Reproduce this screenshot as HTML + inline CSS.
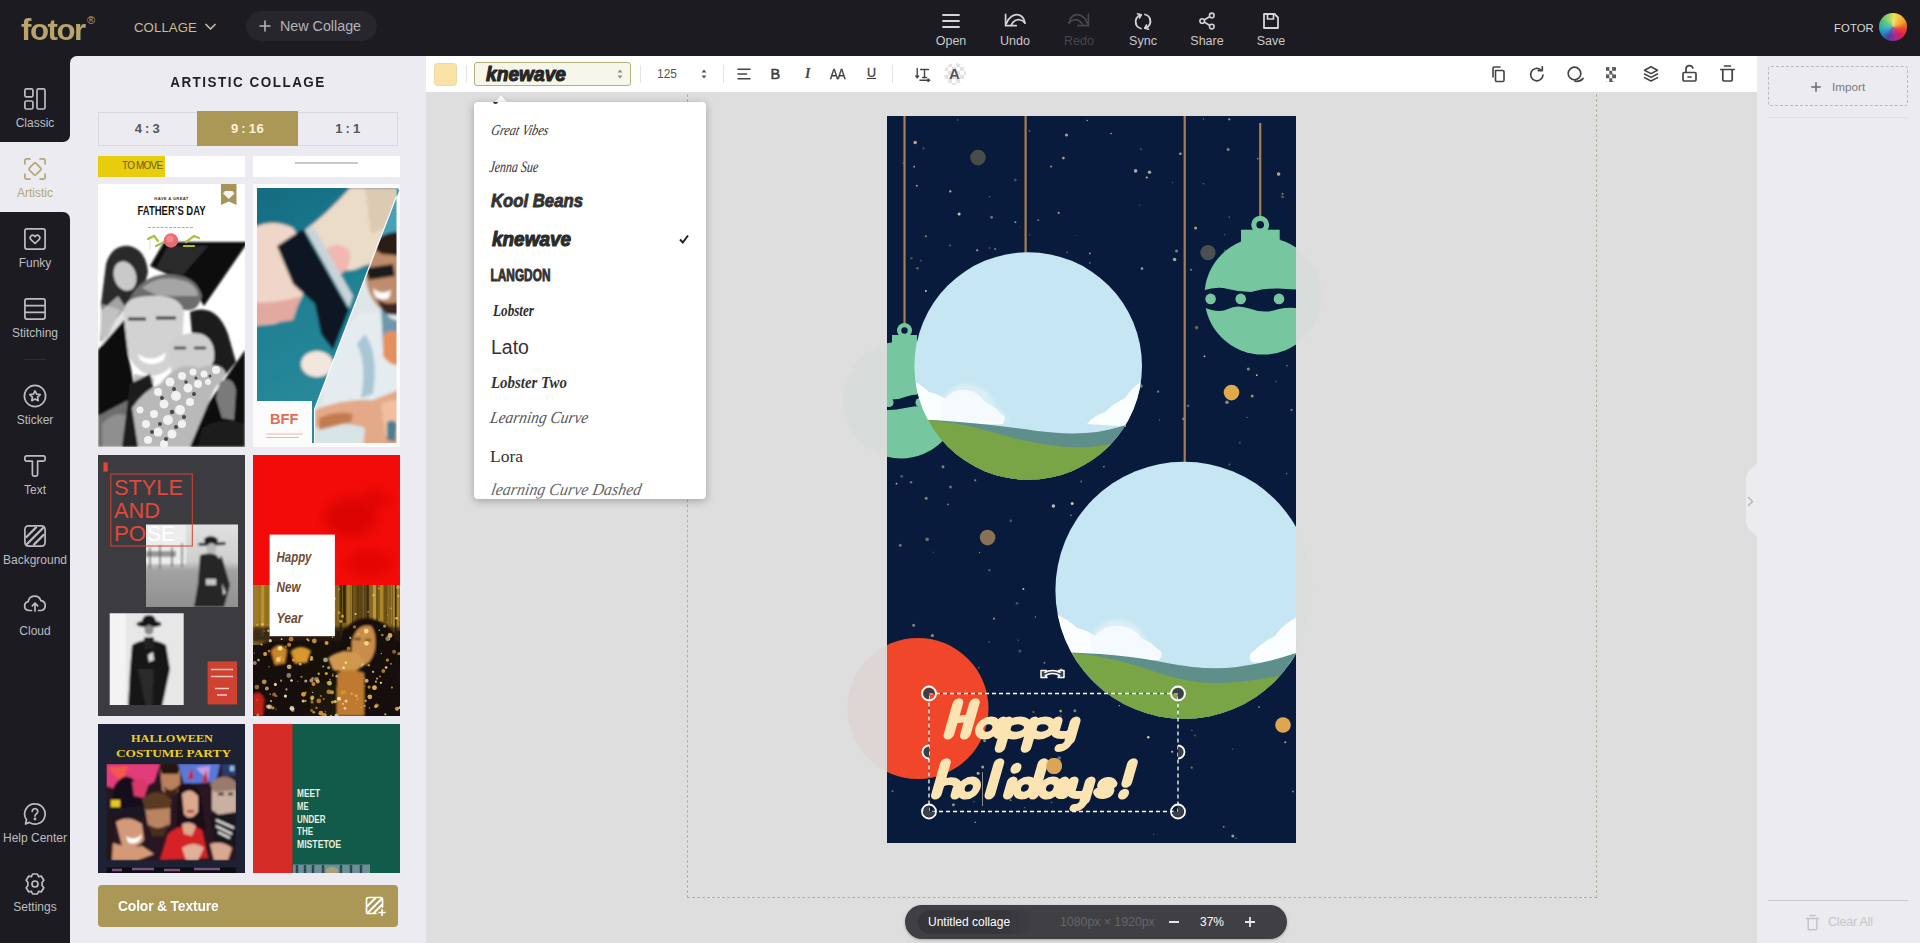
<!DOCTYPE html>
<html>
<head>
<meta charset="utf-8">
<title>Fotor Collage</title>
<style>
*{box-sizing:border-box;margin:0;padding:0}
html,body{width:1920px;height:943px;overflow:hidden;background:#1c1b21;font-family:"Liberation Sans",sans-serif;}
.abs{position:absolute}
#root{position:relative;width:1920px;height:943px;overflow:hidden;background:#1c1b21}
/* top bar */
#top{position:absolute;left:0;top:0;width:1920px;height:56px;background:#1c1b21}
.tlabel{position:absolute;top:34px;width:60px;text-align:center;font-size:12.5px;color:#c9c9cc;line-height:15px}
/* sidebar */
#side{position:absolute;left:0;top:56px;width:70px;height:887px;background:#ebebf1}
.sitem{position:absolute;left:0;width:70px;height:70px;color:#bdbdc0;font-size:12px;text-align:center}
.sitem svg{position:absolute;left:23px;top:15px;width:24px;height:24px}
.sitem span{position:absolute;left:-5px;width:80px;top:43.5px;line-height:15px;text-align:center}
/* panel */
#panel{position:absolute;left:70px;top:56px;width:356px;height:887px;background:#ebebf1;border-top-left-radius:7px}
.thumb{position:absolute;overflow:hidden}
/* toolbar */
#tool{position:absolute;left:426px;top:56px;width:1331px;height:36px;background:#fff}
.sep{position:absolute;top:9px;width:1px;height:18px;background:#e4e4e4}
/* canvas area */
#work{position:absolute;left:426px;top:92px;width:1331px;height:851px;background:#dedede;overflow:hidden}
/* right panel */
#right{position:absolute;left:1757px;top:56px;width:163px;height:887px;background:#ebebf0}
/* dropdown */
#dd{position:absolute;left:474px;top:102px;width:232px;height:397px;background:#fff;border-radius:4px;box-shadow:0 2px 8px rgba(0,0,0,.28);overflow:hidden}
.ddi{position:absolute;left:16px;color:#2f2f2f;white-space:nowrap;transform-origin:0 50%}
</style>
</head>
<body>
<div id="root">

<!-- WORK AREA -->
<div id="work">
  <!-- dashed artboard boundary -->
  <div class="abs" style="left:261px;top:-3px;width:910px;height:809px;border:1px solid #e6e6e2"></div>
  <div class="abs" style="left:261px;top:-3px;width:910px;height:809px;border:1px dashed #b2b2a4"></div>
<!--CANVAS-START-->
  <svg class="abs" style="left:401px;top:-36px" width="529" height="847" viewBox="-60 -60 529 847">
  <defs>
  <clipPath id="cv"><rect x="0" y="0" width="409" height="727"/></clipPath>
  <clipPath id="c1"><circle cx="141.2" cy="250" r="113.8"/></clipPath>
  <clipPath id="c2"><circle cx="297" cy="474.3" r="128.6"/></clipPath>
  <filter id="cb" x="-20%" y="-20%" width="140%" height="140%"><feGaussianBlur stdDeviation="2"/></filter>
  </defs>
  <g opacity=".05"><circle cx="17.500" cy="214.500" r="7.500" fill="#76c79f"/><rect x="5" y="219" width="25" height="10" fill="#76c79f"/><circle cx="14" cy="284" r="58.500" fill="#76c79f"/><circle cx="373.200" cy="108.800" r="9" fill="#76c79f"/><rect x="354" y="113.700" width="38.700" height="20" fill="#76c79f"/><circle cx="376" cy="180" r="58.600" fill="#76c79f"/><circle cx="31" cy="592.500" r="70.500" fill="#f0472b"/><circle cx="141.200" cy="250" r="113.800" fill="#c6e6f3"/><circle cx="297" cy="474.300" r="128.600" fill="#c6e6f3"/></g>
  <g clip-path="url(#cv)">
  <rect x="0" y="0" width="409" height="727" fill="#081b3c"/>
  <circle cx="133.2" cy="111.1" r="0.6" fill="#e9d9a3" opacity="0.3"/><circle cx="40.1" cy="423.4" r="1.8" fill="#e9d9a3" opacity="0.45"/><circle cx="36.8" cy="304.3" r="0.9" fill="#e9d9a3" opacity="0.3"/><circle cx="173.9" cy="599.8" r="0.7" fill="#e9d9a3" opacity="0.45"/><circle cx="385.8" cy="419.2" r="1.3" fill="#f0e6c0" opacity="0.3"/><circle cx="20.9" cy="622.7" r="1.0" fill="#f0e6c0" opacity="0.7"/><circle cx="221.0" cy="414.8" r="1.8" fill="#e9d9a3" opacity="0.45"/><circle cx="237.5" cy="463.9" r="1.1" fill="#e9d9a3" opacity="0.3"/><circle cx="290.4" cy="410.0" r="0.9" fill="#e9d9a3" opacity="0.7"/><circle cx="175.2" cy="229.1" r="1.5" fill="#d9c07a" opacity="0.55"/><circle cx="102.6" cy="132.0" r="0.9" fill="#e9d9a3" opacity="0.3"/><circle cx="123.6" cy="360.0" r="1.1" fill="#d9c07a" opacity="0.7"/><circle cx="248.6" cy="54.9" r="1.8" fill="#f0e6c0" opacity="0.7"/><circle cx="308.6" cy="111.9" r="1.5" fill="#e9d9a3" opacity="0.7"/><circle cx="391.6" cy="58.1" r="1.8" fill="#d9c07a" opacity="0.85"/><circle cx="139.7" cy="255.2" r="1.5" fill="#cfd8c8" opacity="0.85"/><circle cx="29.8" cy="69.7" r="1.0" fill="#e9d9a3" opacity="0.7"/><circle cx="26.6" cy="509.2" r="1.5" fill="#cfd8c8" opacity="0.55"/><circle cx="361.3" cy="252.9" r="1.5" fill="#f0e6c0" opacity="0.55"/><circle cx="249.4" cy="358.9" r="0.9" fill="#f0e6c0" opacity="0.55"/><circle cx="301.0" cy="289.7" r="1.5" fill="#f0e6c0" opacity="0.3"/><circle cx="183.9" cy="399.2" r="0.8" fill="#e9d9a3" opacity="0.7"/><circle cx="114.8" cy="302.3" r="1.1" fill="#f0e6c0" opacity="0.7"/><circle cx="63.1" cy="129.4" r="0.9" fill="#e9d9a3" opacity="0.45"/><circle cx="198.4" cy="427.9" r="1.0" fill="#e9d9a3" opacity="0.55"/><circle cx="61.0" cy="388.5" r="1.1" fill="#e9d9a3" opacity="0.45"/><circle cx="386.8" cy="475.5" r="0.6" fill="#e9d9a3" opacity="0.7"/><circle cx="160.9" cy="290.5" r="0.7" fill="#cfd8c8" opacity="0.7"/><circle cx="27.2" cy="50.7" r="0.9" fill="#f0e6c0" opacity="0.7"/><circle cx="46.5" cy="436.3" r="0.7" fill="#e9d9a3" opacity="0.3"/><circle cx="63.3" cy="75.4" r="1.1" fill="#e9d9a3" opacity="0.85"/><circle cx="30.5" cy="152.3" r="1.3" fill="#d9c07a" opacity="0.45"/><circle cx="389.0" cy="437.4" r="1.5" fill="#e9d9a3" opacity="0.3"/><circle cx="345.8" cy="720.0" r="1.5" fill="#cfd8c8" opacity="0.7"/><circle cx="128.3" cy="106.2" r="1.1" fill="#cfd8c8" opacity="0.55"/><circle cx="337.7" cy="118.7" r="0.6" fill="#e9d9a3" opacity="0.45"/><circle cx="148.5" cy="500.9" r="0.6" fill="#d9c07a" opacity="0.85"/><circle cx="398.3" cy="626.2" r="1.0" fill="#d9c07a" opacity="0.85"/><circle cx="369.8" cy="259.2" r="0.9" fill="#e9d9a3" opacity="0.85"/><circle cx="317.5" cy="240.3" r="0.9" fill="#f0e6c0" opacity="0.85"/><circle cx="328.5" cy="593.7" r="0.9" fill="#e9d9a3" opacity="0.45"/><circle cx="201.6" cy="530.5" r="0.6" fill="#cfd8c8" opacity="0.55"/><circle cx="107.0" cy="502.7" r="1.1" fill="#d9c07a" opacity="0.7"/><circle cx="388.8" cy="265.6" r="0.9" fill="#f0e6c0" opacity="0.3"/><circle cx="192.4" cy="246.2" r="1.5" fill="#e9d9a3" opacity="0.85"/><circle cx="342.4" cy="348.7" r="1.1" fill="#e9d9a3" opacity="0.3"/><circle cx="370.5" cy="567.6" r="0.9" fill="#f0e6c0" opacity="0.7"/><circle cx="177.7" cy="461.7" r="0.7" fill="#cfd8c8" opacity="0.7"/><circle cx="164.6" cy="686.5" r="0.8" fill="#f0e6c0" opacity="0.45"/><circle cx="13.2" cy="429.2" r="1.5" fill="#e9d9a3" opacity="0.45"/><circle cx="336.7" cy="710.8" r="1.1" fill="#e9d9a3" opacity="0.45"/><circle cx="224.1" cy="17.5" r="0.7" fill="#f0e6c0" opacity="0.85"/><circle cx="177.7" cy="632.3" r="0.9" fill="#d9c07a" opacity="0.3"/><circle cx="88.2" cy="364.3" r="1.1" fill="#e9d9a3" opacity="0.55"/><circle cx="171.7" cy="96.8" r="1.1" fill="#e9d9a3" opacity="0.7"/><circle cx="332.1" cy="375.6" r="1.8" fill="#e9d9a3" opacity="0.45"/><circle cx="63.5" cy="371.1" r="1.5" fill="#e9d9a3" opacity="0.45"/><circle cx="3.6" cy="579.8" r="0.8" fill="#cfd8c8" opacity="0.45"/><circle cx="252.7" cy="89.0" r="0.6" fill="#e9d9a3" opacity="0.55"/><circle cx="216.9" cy="350.8" r="0.7" fill="#e9d9a3" opacity="0.85"/><circle cx="102.6" cy="202.2" r="0.7" fill="#cfd8c8" opacity="0.85"/><circle cx="229.5" cy="551.5" r="0.7" fill="#d9c07a" opacity="0.7"/><circle cx="250.1" cy="367.5" r="1.8" fill="#d9c07a" opacity="0.45"/><circle cx="185.2" cy="387.6" r="1.5" fill="#f0e6c0" opacity="0.85"/><circle cx="285.2" cy="635.7" r="1.0" fill="#f0e6c0" opacity="0.85"/><circle cx="342.2" cy="101.1" r="0.7" fill="#cfd8c8" opacity="0.7"/><circle cx="130.0" cy="487.2" r="1.3" fill="#f0e6c0" opacity="0.3"/><circle cx="273.1" cy="568.8" r="0.8" fill="#f0e6c0" opacity="0.55"/><circle cx="104.5" cy="101.2" r="1.5" fill="#e9d9a3" opacity="0.45"/><circle cx="163.3" cy="354.3" r="0.9" fill="#cfd8c8" opacity="0.45"/><circle cx="404.6" cy="294.0" r="1.3" fill="#d9c07a" opacity="0.45"/><circle cx="131.0" cy="524.1" r="0.6" fill="#e9d9a3" opacity="0.55"/><circle cx="187.8" cy="510.4" r="1.3" fill="#e9d9a3" opacity="0.55"/><circle cx="254.7" cy="372.4" r="0.7" fill="#f0e6c0" opacity="0.3"/><circle cx="395.5" cy="77.8" r="1.0" fill="#e9d9a3" opacity="0.55"/><circle cx="368.9" cy="133.3" r="0.8" fill="#d9c07a" opacity="0.7"/><circle cx="166.4" cy="390.0" r="1.8" fill="#cfd8c8" opacity="0.85"/><circle cx="285.7" cy="66.7" r="0.6" fill="#cfd8c8" opacity="0.45"/><circle cx="364.6" cy="196.4" r="0.6" fill="#d9c07a" opacity="0.3"/><circle cx="35.9" cy="621.1" r="0.7" fill="#e9d9a3" opacity="0.55"/><circle cx="185.8" cy="247.2" r="1.8" fill="#d9c07a" opacity="0.7"/><circle cx="253.8" cy="33.2" r="0.9" fill="#f0e6c0" opacity="0.3"/><circle cx="108.1" cy="133.0" r="1.0" fill="#e9d9a3" opacity="0.55"/><circle cx="309.6" cy="211.6" r="1.8" fill="#d9c07a" opacity="0.45"/><circle cx="142.5" cy="15.1" r="1.0" fill="#e9d9a3" opacity="0.3"/><circle cx="9.5" cy="367.6" r="0.9" fill="#cfd8c8" opacity="0.85"/><circle cx="101.5" cy="325.2" r="1.3" fill="#e9d9a3" opacity="0.7"/><circle cx="340.0" cy="286.2" r="1.8" fill="#f0e6c0" opacity="0.55"/><circle cx="399.9" cy="249.8" r="0.8" fill="#d9c07a" opacity="0.7"/><circle cx="399.7" cy="607.1" r="0.6" fill="#d9c07a" opacity="0.3"/><circle cx="176.4" cy="42.1" r="1.3" fill="#d9c07a" opacity="0.85"/><circle cx="244.5" cy="502.8" r="0.6" fill="#f0e6c0" opacity="0.7"/><circle cx="65.8" cy="324.3" r="1.0" fill="#d9c07a" opacity="0.55"/><circle cx="395.9" cy="397.5" r="0.9" fill="#d9c07a" opacity="0.3"/><circle cx="90.2" cy="134.3" r="1.1" fill="#e9d9a3" opacity="0.7"/><circle cx="194.2" cy="365.5" r="0.9" fill="#e9d9a3" opacity="0.45"/><circle cx="316.4" cy="67.7" r="0.7" fill="#cfd8c8" opacity="0.45"/><circle cx="239.7" cy="286.8" r="1.0" fill="#f0e6c0" opacity="0.55"/><circle cx="36.2" cy="694.4" r="0.8" fill="#cfd8c8" opacity="0.85"/><circle cx="311.5" cy="523.0" r="1.5" fill="#d9c07a" opacity="0.45"/><circle cx="295.3" cy="467.0" r="0.6" fill="#cfd8c8" opacity="0.85"/><circle cx="299.2" cy="589.2" r="0.8" fill="#e9d9a3" opacity="0.85"/><circle cx="232.2" cy="589.7" r="0.6" fill="#f0e6c0" opacity="0.85"/><circle cx="36.5" cy="32.3" r="1.1" fill="#cfd8c8" opacity="0.3"/><circle cx="340.5" cy="405.8" r="0.6" fill="#f0e6c0" opacity="0.85"/><circle cx="200.2" cy="4.4" r="0.7" fill="#e9d9a3" opacity="0.85"/><circle cx="39.2" cy="382.3" r="1.5" fill="#e9d9a3" opacity="0.55"/><circle cx="344.7" cy="171.8" r="0.9" fill="#cfd8c8" opacity="0.45"/><circle cx="202.0" cy="278.6" r="1.5" fill="#e9d9a3" opacity="0.55"/><circle cx="251.9" cy="466.7" r="0.7" fill="#f0e6c0" opacity="0.85"/><circle cx="136.4" cy="473.1" r="1.0" fill="#e9d9a3" opacity="0.85"/><circle cx="56.0" cy="350.8" r="1.5" fill="#e9d9a3" opacity="0.55"/><circle cx="282.3" cy="490.5" r="1.0" fill="#d9c07a" opacity="0.85"/><circle cx="190.2" cy="339.2" r="0.7" fill="#f0e6c0" opacity="0.85"/><circle cx="128.2" cy="64.1" r="1.5" fill="#d9c07a" opacity="0.3"/><circle cx="187.9" cy="594.8" r="1.5" fill="#cfd8c8" opacity="0.55"/><circle cx="87.0" cy="685.7" r="0.9" fill="#e9d9a3" opacity="0.3"/><circle cx="38.6" cy="542.4" r="1.0" fill="#f0e6c0" opacity="0.55"/><circle cx="246.4" cy="458.7" r="1.0" fill="#d9c07a" opacity="0.3"/><circle cx="95.7" cy="651.0" r="1.5" fill="#e9d9a3" opacity="0.7"/><circle cx="66.4" cy="688.8" r="1.5" fill="#d9c07a" opacity="0.7"/><circle cx="296.5" cy="302.9" r="1.3" fill="#e9d9a3" opacity="0.55"/><circle cx="342.3" cy="3.3" r="1.1" fill="#e9d9a3" opacity="0.7"/><circle cx="382.7" cy="143.5" r="0.6" fill="#d9c07a" opacity="0.55"/><circle cx="152.7" cy="286.1" r="0.7" fill="#cfd8c8" opacity="0.55"/><circle cx="308.0" cy="619.6" r="1.0" fill="#e9d9a3" opacity="0.3"/><circle cx="340.0" cy="208.5" r="0.8" fill="#d9c07a" opacity="0.45"/><circle cx="178.7" cy="230.2" r="1.1" fill="#e9d9a3" opacity="0.7"/><circle cx="330.8" cy="458.1" r="1.8" fill="#f0e6c0" opacity="0.85"/><circle cx="293.4" cy="37.8" r="1.3" fill="#e9d9a3" opacity="0.7"/><circle cx="306.8" cy="468.0" r="1.0" fill="#e9d9a3" opacity="0.7"/><circle cx="371.3" cy="399.7" r="0.8" fill="#cfd8c8" opacity="0.7"/><circle cx="141.2" cy="217.3" r="1.0" fill="#f0e6c0" opacity="0.7"/><circle cx="123.8" cy="404.9" r="1.3" fill="#f0e6c0" opacity="0.3"/><circle cx="262.5" cy="56.3" r="1.8" fill="#e9d9a3" opacity="0.7"/><circle cx="91.1" cy="657.2" r="1.5" fill="#f0e6c0" opacity="0.7"/><circle cx="223.9" cy="178.5" r="0.8" fill="#e9d9a3" opacity="0.55"/><circle cx="38.9" cy="174.9" r="1.0" fill="#f0e6c0" opacity="0.85"/><circle cx="361.3" cy="544.0" r="1.3" fill="#cfd8c8" opacity="0.7"/><circle cx="304.1" cy="153.8" r="1.0" fill="#e9d9a3" opacity="0.55"/><circle cx="203.7" cy="417.2" r="1.1" fill="#e9d9a3" opacity="0.45"/><circle cx="216.3" cy="573.4" r="0.9" fill="#d9c07a" opacity="0.3"/><circle cx="365.2" cy="280.0" r="1.5" fill="#d9c07a" opacity="0.7"/><circle cx="345.7" cy="633.1" r="0.6" fill="#e9d9a3" opacity="0.45"/><circle cx="174.2" cy="554.1" r="1.5" fill="#cfd8c8" opacity="0.85"/><circle cx="2.1" cy="285.1" r="1.8" fill="#cfd8c8" opacity="0.7"/><circle cx="102.6" cy="80.8" r="0.8" fill="#e9d9a3" opacity="0.45"/><circle cx="395.6" cy="80.7" r="1.5" fill="#e9d9a3" opacity="0.3"/><circle cx="316.6" cy="3.0" r="0.8" fill="#e9d9a3" opacity="0.45"/><circle cx="374.6" cy="468.7" r="1.0" fill="#d9c07a" opacity="0.45"/><circle cx="215.9" cy="318.3" r="0.7" fill="#e9d9a3" opacity="0.3"/><circle cx="123.6" cy="684.2" r="0.9" fill="#d9c07a" opacity="0.7"/><circle cx="92.6" cy="436.6" r="0.6" fill="#d9c07a" opacity="0.85"/><circle cx="405.5" cy="203.4" r="1.1" fill="#cfd8c8" opacity="0.45"/><circle cx="215.1" cy="397.5" r="0.6" fill="#d9c07a" opacity="0.7"/><circle cx="24.4" cy="142.3" r="1.3" fill="#d9c07a" opacity="0.3"/><circle cx="94.3" cy="308.8" r="1.1" fill="#cfd8c8" opacity="0.45"/><circle cx="15.8" cy="246.4" r="1.3" fill="#cfd8c8" opacity="0.55"/><circle cx="82.2" cy="578.3" r="1.8" fill="#f0e6c0" opacity="0.3"/><circle cx="202.8" cy="146.9" r="0.9" fill="#cfd8c8" opacity="0.45"/><circle cx="91.7" cy="551.8" r="1.0" fill="#e9d9a3" opacity="0.3"/><circle cx="202.8" cy="137.4" r="0.9" fill="#cfd8c8" opacity="0.7"/><circle cx="370.7" cy="42.8" r="0.8" fill="#e9d9a3" opacity="0.7"/><circle cx="88.2" cy="706.3" r="0.8" fill="#e9d9a3" opacity="0.7"/><circle cx="289.5" cy="135.1" r="1.5" fill="#e9d9a3" opacity="0.55"/><circle cx="406.0" cy="675.5" r="1.1" fill="#f0e6c0" opacity="0.45"/><circle cx="266.2" cy="381.4" r="1.5" fill="#d9c07a" opacity="0.3"/><circle cx="271.1" cy="275.7" r="1.1" fill="#cfd8c8" opacity="0.55"/><circle cx="70.6" cy="4.1" r="1.0" fill="#d9c07a" opacity="0.3"/><circle cx="172.2" cy="642.0" r="1.8" fill="#cfd8c8" opacity="0.45"/><circle cx="146.4" cy="596.0" r="1.3" fill="#e9d9a3" opacity="0.3"/><circle cx="287.6" cy="143.5" r="1.8" fill="#f0e6c0" opacity="0.7"/><circle cx="132.9" cy="535.1" r="1.5" fill="#cfd8c8" opacity="0.3"/><circle cx="102.4" cy="454.2" r="1.3" fill="#cfd8c8" opacity="0.3"/><circle cx="16.1" cy="47.2" r="0.6" fill="#f0e6c0" opacity="0.55"/><circle cx="304.7" cy="651.7" r="1.1" fill="#d9c07a" opacity="0.55"/><circle cx="137.7" cy="691.6" r="0.6" fill="#d9c07a" opacity="0.55"/><circle cx="376.3" cy="217.0" r="0.7" fill="#f0e6c0" opacity="0.3"/><circle cx="45.4" cy="519.4" r="1.5" fill="#d9c07a" opacity="0.7"/><circle cx="372.0" cy="591.1" r="0.8" fill="#f0e6c0" opacity="0.7"/><circle cx="5.5" cy="675.2" r="1.0" fill="#e9d9a3" opacity="0.45"/><circle cx="97.6" cy="624.7" r="1.5" fill="#e9d9a3" opacity="0.55"/><circle cx="34.0" cy="144.7" r="0.8" fill="#cfd8c8" opacity="0.45"/><circle cx="28.2" cy="26.5" r="1.8" fill="#d9c07a" opacity="0.85"/><circle cx="67.1" cy="310.4" r="0.7" fill="#d9c07a" opacity="0.3"/><circle cx="255.0" cy="152.6" r="1.3" fill="#cfd8c8" opacity="0.7"/><circle cx="72.1" cy="98.1" r="1.5" fill="#f0e6c0" opacity="0.85"/><circle cx="304.9" cy="614.4" r="0.7" fill="#d9c07a" opacity="0.55"/><circle cx="115.2" cy="195.5" r="1.0" fill="#f0e6c0" opacity="0.55"/><circle cx="180.0" cy="136.3" r="0.9" fill="#d9c07a" opacity="0.45"/><circle cx="360.1" cy="420.1" r="1.1" fill="#cfd8c8" opacity="0.3"/><circle cx="103.9" cy="179.8" r="1.8" fill="#e9d9a3" opacity="0.45"/><circle cx="266.6" cy="718.5" r="0.7" fill="#cfd8c8" opacity="0.3"/><circle cx="359.5" cy="169.1" r="1.5" fill="#e9d9a3" opacity="0.55"/><circle cx="357.1" cy="170.4" r="0.6" fill="#e9d9a3" opacity="0.45"/><circle cx="396.1" cy="423.6" r="0.7" fill="#e9d9a3" opacity="0.55"/><circle cx="352.8" cy="326.7" r="1.0" fill="#e9d9a3" opacity="0.3"/><circle cx="260.2" cy="515.1" r="1.1" fill="#e9d9a3" opacity="0.45"/><circle cx="151.3" cy="104.2" r="0.9" fill="#e9d9a3" opacity="0.55"/><circle cx="244.8" cy="473.1" r="0.9" fill="#d9c07a" opacity="0.3"/><circle cx="167.6" cy="270.8" r="1.0" fill="#f0e6c0" opacity="0.3"/><circle cx="14.7" cy="360.3" r="1.5" fill="#cfd8c8" opacity="0.3"/><circle cx="43.1" cy="287.8" r="1.8" fill="#e9d9a3" opacity="0.45"/><circle cx="38.9" cy="120.3" r="1.0" fill="#d9c07a" opacity="0.7"/><circle cx="272.5" cy="304.1" r="0.6" fill="#e9d9a3" opacity="0.55"/><circle cx="359.9" cy="301.4" r="0.6" fill="#f0e6c0" opacity="0.55"/><circle cx="160.2" cy="294.8" r="0.6" fill="#f0e6c0" opacity="0.7"/><circle cx="173.6" cy="595.1" r="1.3" fill="#d9c07a" opacity="0.85"/><circle cx="188.7" cy="119.5" r="0.6" fill="#e9d9a3" opacity="0.3"/><circle cx="59.7" cy="585.1" r="1.3" fill="#e9d9a3" opacity="0.3"/><circle cx="254.0" cy="270.1" r="1.8" fill="#f0e6c0" opacity="0.45"/><circle cx="142.9" cy="119.0" r="0.8" fill="#e9d9a3" opacity="0.3"/><circle cx="157.4" cy="546.8" r="0.9" fill="#f0e6c0" opacity="0.55"/><circle cx="341.1" cy="33.4" r="1.5" fill="#e9d9a3" opacity="0.55"/><circle cx="248.1" cy="462.1" r="0.7" fill="#f0e6c0" opacity="0.85"/><circle cx="261.3" cy="621.3" r="1.3" fill="#f0e6c0" opacity="0.85"/><circle cx="337.8" cy="134.3" r="0.9" fill="#cfd8c8" opacity="0.3"/><circle cx="382.1" cy="115.1" r="1.1" fill="#f0e6c0" opacity="0.3"/><circle cx="102.1" cy="526.1" r="0.9" fill="#e9d9a3" opacity="0.3"/><circle cx="343.2" cy="488.0" r="1.1" fill="#cfd8c8" opacity="0.3"/><circle cx="244.8" cy="399.7" r="1.0" fill="#d9c07a" opacity="0.7"/><circle cx="238.0" cy="309.8" r="1.1" fill="#e9d9a3" opacity="0.7"/><circle cx="179.5" cy="18.9" r="1.5" fill="#f0e6c0" opacity="0.7"/><circle cx="183.0" cy="449.2" r="1.5" fill="#cfd8c8" opacity="0.45"/><circle cx="164.1" cy="50.5" r="1.1" fill="#d9c07a" opacity="0.7"/><circle cx="39.1" cy="321.5" r="1.8" fill="#e9d9a3" opacity="0.3"/><circle cx="259.8" cy="61.5" r="1.1" fill="#e9d9a3" opacity="0.85"/><circle cx="24.0" cy="366.3" r="1.3" fill="#e9d9a3" opacity="0.45"/><circle cx="349.1" cy="722.2" r="0.7" fill="#f0e6c0" opacity="0.45"/><circle cx="399.6" cy="357.6" r="0.8" fill="#e9d9a3" opacity="0.45"/>
  <path d="M17.500 0V208M138.600 0V137M297.700 0V346M373.200 7V100" stroke="#a97d50" stroke-width="2.200" fill="none"/>
  <circle cx="17.500" cy="214.500" r="7.500" fill="#76c79f"/><circle cx="17.500" cy="214.500" r="3.200" fill="#081b3c"/>
  <rect x="5" y="219" width="25" height="10" fill="#76c79f"/>
  <circle cx="14" cy="284" r="58.500" fill="#76c79f"/>
  <path d="M-46 281 Q-30 276 -12 281 T18 281 T48 280 T76 281 V292 Q60 296 48 292 T18 292 T-12 292 T-46 292Z" fill="#081b3c"/>
  <circle cx="2" cy="286.500" r="4.600" fill="#76c79f"/><circle cx="33" cy="286.500" r="4.600" fill="#76c79f"/>
  <circle cx="373.200" cy="108.800" r="9" fill="#76c79f"/><circle cx="373.200" cy="108.800" r="3.800" fill="#081b3c"/>
  <rect x="354" y="113.700" width="38.700" height="20" fill="#76c79f"/>
  <circle cx="376" cy="180" r="58.600" fill="#76c79f"/>
  <path d="M316 174.500 Q330 170 341 173 T364 176 Q378 172 392 172.500 T436 176 V190 Q420 193 410 192 T392 193 Q378 198 364 193 T341 193 T316 191Z" fill="#081b3c"/>
  <circle cx="323.600" cy="182.900" r="5.300" fill="#76c79f"/><circle cx="353.700" cy="182.900" r="5.300" fill="#76c79f"/><circle cx="392" cy="182.900" r="5.300" fill="#76c79f"/>
  <circle cx="91" cy="41.600" r="7.800" fill="#474d48"/>
  <circle cx="321" cy="136.600" r="7.600" fill="#4a514f"/>
  <circle cx="344.500" cy="276.600" r="7.800" fill="#e3a84c"/>
  <circle cx="100.600" cy="421.600" r="7.800" fill="#877258"/>
  <circle cx="396" cy="609" r="7.800" fill="#dfa64d"/>
  <circle cx="167" cy="650" r="8" fill="#d9a656"/>
  <circle cx="31" cy="592.500" r="70.500" fill="#f0472b"/>
  <circle cx="141.200" cy="250" r="113.800" fill="#c6e6f3"/>
  <g clip-path="url(#c1)">
  <path d="M20 262 Q34 268 42 276 Q52 278 58 283 Q66 272 80 274 Q92 276 98 286 Q108 290 114 298 Q120 300 116 308 L20 312Z" fill="#fff" opacity=".93"/>
  <path d="M56 282 Q70 262 90 270 Q104 276 108 290 Q118 296 122 306 L56 306Z" fill="#eef6fb" opacity=".55" filter="url(#cb)"/>
  <path d="M260 262 Q246 270 238 282 Q226 288 218 296 Q206 300 200 308 L262 312Z" fill="#fff" opacity=".93"/>
  <path d="M20 303 Q70 304 137 313 Q180 320 210 316 Q236 312 262 300 V380 H20Z" fill="#5f8f8b"/>
  <path d="M20 303 Q60 303 109 317 Q150 330 192 331.500 Q215 331 250 322 V380 H20Z" fill="#79a546"/>
  </g>
  <circle cx="297" cy="474.300" r="128.600" fill="#c6e6f3"/>
  <g clip-path="url(#c2)">
  <path d="M165 497 Q180 502 190 512 Q200 514 208 520 Q218 508 234 510 Q248 512 254 522 Q264 526 270 533 Q278 536 272 544 L165 548Z" fill="#fff" opacity=".93"/>
  <path d="M204 519 Q220 498 242 506 Q256 512 260 526 Q272 532 276 542 L204 542Z" fill="#eef6fb" opacity=".55" filter="url(#cb)"/>
  <path d="M412 500 Q396 508 388 520 Q376 526 368 534 Q360 538 364 546 L412 550Z" fill="#fff" opacity=".93"/>
  <path d="M165 536 Q230 537 280 547 Q320 555 350 551 Q384 546 412 536 V610 H165Z" fill="#5f8f8b"/>
  <path d="M165 536 Q215 537 264 554.600 Q300 567 328 567 Q360 567 412 556 V610 H165Z" fill="#79a546"/>
  </g>
  <g fill="none" stroke="#fce3b2" stroke-linecap="round" stroke-linejoin="round">
  <g transform="translate(0 623.500) skewX(-16)"><path stroke-width="10.500" d="M60.5 -36L60.5 -5.25M77 -36L77 -5.25M110 -17.75L110 -7Q110 -5.25 114 -5.75M115.5 -17.75L115.5 8M141.5 -17.75L141.5 8M165 -17.75L165 -11M183 -17.75L183 0"/><path stroke-width="7.800" d="M60.5 -19.5L77 -21.5M89.1 -11.5A8.4 7.6 0 1 0 105.9 -11.5A8.4 7.6 0 1 0 89.1 -11.5ZM115.5 -11.5A11.0 7.6 0 1 0 137.5 -11.5A11.0 7.6 0 1 0 115.5 -11.5ZM141.5 -11.5A10.25 7.6 0 1 0 162.0 -11.5A10.25 7.6 0 1 0 141.5 -11.5ZM165 -12Q165 -4.5 174.0 -4.5Q183 -4.5 183 -12M183 -2Q183 8.5 174 8.5"/></g>
  <g transform="translate(0 683.500) skewX(-16)"><path stroke-width="10.500" d="M48 -36L48 -5.25M67.5 -11L67.5 -5.25M101.5 -36L101.5 -5.25M120 -17.75L120 -5.25M120 -31.5L120 -31M145.5 -36L145.5 -5.25M171.5 -17.75L171.5 -7Q171.5 -5.25 175.5 -5.75M181 -17.75L181 -11M198 -17.75L198 0M235 -36L235 -17M235 -5.6L235 -5.25"/><path stroke-width="7.800" d="M48 -10C48 -21 67.5 -21 67.5 -11M70.7 -11.5A7.8 7.6 0 1 0 86.3 -11.5A7.8 7.6 0 1 0 70.7 -11.5ZM127.0 -11.5A7.6 7.6 0 1 0 142.2 -11.5A7.6 7.6 0 1 0 127.0 -11.5ZM151.9 -11.5A7.6 7.6 0 1 0 167.1 -11.5A7.6 7.6 0 1 0 151.9 -11.5ZM181 -12Q181 -4.5 189.5 -4.5Q198 -4.5 198 -12M198 -2Q198 8.5 189 8.5M222 -15C218 -20.5 209 -19.5 210 -14.5C211 -10 221 -12.5 221 -8C221 -3 211 -3.5 208 -8"/></g>
  </g>
  <circle cx="167" cy="650" r="8" fill="#d9a656" opacity=".85"/>
  <path d="M95.500 656V690" stroke="#8d8a80" stroke-width="1"/>
  <rect x="42" y="577.500" width="249" height="118" fill="none" stroke="#fff" stroke-width="1.300" stroke-dasharray="4 3"/>
  <rect x="42" y="577.500" width="249" height="118" fill="none" stroke="#222" stroke-width="1.300" stroke-dasharray="3 4" stroke-dashoffset="-4" opacity=".35"/>
  <circle cx="42" cy="577.5" r="7" fill="none" stroke="#fff" stroke-width="1.800"/>
  <path d="M42 577.5L42 583.1A5.6 5.6 0 1 1 47.6 577.5Z" fill="#3b3f47"/>
  <circle cx="291" cy="577.5" r="7" fill="none" stroke="#fff" stroke-width="1.800"/>
  <path d="M291 577.5L285.4 577.5A5.6 5.6 0 1 1 291 583.1Z" fill="#3b3f47"/>
  <circle cx="42" cy="695.5" r="7" fill="none" stroke="#fff" stroke-width="1.800"/>
  <path d="M42 695.5L47.6 695.5A5.6 5.6 0 1 1 42 689.9Z" fill="#3b3f47"/>
  <circle cx="291" cy="695.5" r="7" fill="none" stroke="#fff" stroke-width="1.800"/>
  <path d="M291 695.5L291 689.9A5.6 5.6 0 1 1 285.4 695.5Z" fill="#3b3f47"/>
  <path d="M42 629.500a6.500 6.500 0 0 0 0 13" fill="#3b3f47" stroke="#fff" stroke-width="1.800"/>
  <path d="M291 629.500a6.500 6.500 0 0 1 0 13" fill="#3b3f47" stroke="#fff" stroke-width="1.800"/>
  <g transform="translate(165.500 558)" fill="#3b3f47" stroke="#fff" stroke-width="1.500" stroke-linejoin="round"><path d="M-11.500 -3.500L-6 -3.500L-7.500 -1.600Q0 -5.500 7.500 -1.600L6 -3.500L11.500 -3.500L11.500 3.500L5.500 3.500L7.200 1.500Q0 -2.400 -7.200 1.500L-5.500 3.500L-11.500 3.500Z"/></g>
  </g>
  </svg>
<!--CANVAS-END-->
  <!--CANVAS-->
</div>

<!-- TOOLBAR -->
<div id="tool">
  <!-- colour swatch -->
  <div class="abs" style="left:8px;top:6.500px;width:23px;height:23px;border-radius:3.500px;background:#fbe3a8;border:1px solid #ecd9a4"></div>
  <div class="sep" style="left:40px"></div>
  <!-- font select -->
  <div class="abs" style="left:48px;top:6px;width:157px;height:24px;border:1px solid #b3b27a;border-radius:3px;background:#f6f6ea"></div>
  <svg class="abs" style="left:56px;top:5px" width="100" height="26" viewBox="0 0 100 26"><text x="4" y="20" font-family="Liberation Sans" font-weight="bold" font-style="italic" font-size="20" fill="#262626" stroke="#262626" stroke-width="1.100" stroke-linejoin="round" textLength="80" lengthAdjust="spacingAndGlyphs">knewave</text></svg>
  <svg class="abs" style="left:190px;top:11px" width="8" height="14" viewBox="0 0 8 14"><path d="M1.500 5.500L4 2.500l2.500 3zM1.500 8.500L4 11.500l2.500-3z" fill="#8d8d8d"/></svg>
  <div class="sep" style="left:214px"></div>
  <div class="abs" style="left:231px;top:11px;font-size:12px;color:#555;line-height:14px">125</div>
  <svg class="abs" style="left:274px;top:11px" width="8" height="14" viewBox="0 0 8 14"><path d="M1.500 5.500L4 2.500l2.500 3zM1.500 8.500L4 11.500l2.500-3z" fill="#555"/></svg>
  <div class="sep" style="left:297px"></div>
  <!-- align -->
  <svg class="abs" style="left:311px;top:12px" width="14" height="12" viewBox="0 0 14 12"><path d="M1 1.200h12M1 6h8.500M1 10.800h12" stroke="#444" stroke-width="1.500" stroke-linecap="round"/></svg>
  <div class="abs" style="left:344.500px;top:10px;font-size:14.500px;color:#3c3c3c;line-height:16px;-webkit-text-stroke:.5px #3c3c3c">B</div>
  <div class="abs" style="left:379px;top:10px;font-size:14px;font-weight:bold;font-style:italic;color:#444;line-height:16px;font-family:'Liberation Serif',serif">I</div>
  <div class="abs" style="left:404px;top:9.500px;font-size:14.500px;color:#3c3c3c;line-height:16px;letter-spacing:-.6px;transform:scaleX(.84);transform-origin:0 0;-webkit-text-stroke:.35px #3c3c3c">AA</div>
  <div class="abs" style="left:441px;top:9px;font-size:12.500px;color:#3c3c3c;line-height:16px;text-decoration:underline;-webkit-text-stroke:.3px #3c3c3c">U</div>
  <div class="sep" style="left:466px"></div>
  <!-- line height -->
  <svg class="abs" style="left:489px;top:10px" width="16" height="16" viewBox="0 0 16 16" fill="none" stroke="#444" stroke-width="1.400" stroke-linecap="round"><path d="M2.200 2.500v9M.8 10l1.400 1.600L3.600 10M5.500 3.500h8M9.500 3.500v8M7.500 11.500h4M5 14.300h9.500M13 13l1.600 1.300L13 15.600"/></svg>
  <!-- transparency A -->
  <div class="abs" style="left:518px;top:7px;width:22px;height:22px;border-radius:50%;background:conic-gradient(#e2e2e2 25%,#fff 0 50%,#e2e2e2 0 75%,#fff 0) 0 0/8px 8px"></div>
  <div class="abs" style="left:523px;top:9px;font-size:15px;font-weight:bold;color:#555;line-height:18px">A</div>

  <!-- right icons -->
  <svg class="abs" style="left:1064px;top:9px" width="17" height="18" viewBox="0 0 17 18" fill="none" stroke="#444" stroke-width="1.600" stroke-linejoin="round"><path d="M5.500 5.500h7.200a1.300 1.300 0 0 1 1.300 1.300v8.400a1.300 1.300 0 0 1-1.300 1.300H6.800a1.300 1.300 0 0 1-1.300-1.300z"/><path d="M3 12.500V3.300A1.300 1.300 0 0 1 4.300 2H10.500"/></svg>
  <svg class="abs" style="left:1102px;top:9px" width="18" height="18" viewBox="0 0 18 18" fill="none" stroke="#444" stroke-width="1.700" stroke-linecap="round" stroke-linejoin="round"><path d="M15 10A6.200 6.200 0 1 1 12.800 4.800"/><path d="M10.300 5.600h4V1.800"/></svg>
  <svg class="abs" style="left:1140px;top:9px" width="19" height="18" viewBox="0 0 19 18" fill="none" stroke="#444" stroke-width="1.700" stroke-linecap="round"><circle cx="8.500" cy="8.500" r="6.300"/><path d="M9 16.200c3.500.4 6.500-.6 8-2.700" stroke-width="1.800"/></svg>
  <div class="abs" style="left:1179.500px;top:10.500px;width:10px;height:15px;background:conic-gradient(#5a5a5a 25%,#fff 0 50%,#5a5a5a 0 75%,#fff 0) 3.330px 0/6.660px 7.500px;border-radius:1px"></div>
  <svg class="abs" style="left:1216px;top:9px" width="18" height="18" viewBox="0 0 18 18" fill="none" stroke="#444" stroke-width="1.600" stroke-linejoin="round" stroke-linecap="round"><path d="M9 1.800l6.500 3.400L9 8.600 2.500 5.200z"/><path d="M2.500 9L9 12.400 15.500 9M2.500 12.600L9 16l6.500-3.400"/></svg>
  <svg class="abs" style="left:1255px;top:8px" width="17" height="19" viewBox="0 0 17 19" fill="none" stroke="#444" stroke-width="1.700" stroke-linecap="round" stroke-linejoin="round"><rect x="2" y="8.500" width="13" height="8.500" rx="1.200"/><path d="M5 8.200V5a3.500 3.500 0 0 1 6.800-1.100M7 13h3"/></svg>
  <svg class="abs" style="left:1293px;top:8px" width="17" height="19" viewBox="0 0 17 19" fill="none" stroke="#444" stroke-width="1.700" stroke-linecap="round" stroke-linejoin="round"><path d="M5.500 2h6M1.800 5.500h13.400M3.800 5.800v9.700a1.500 1.500 0 0 0 1.500 1.500h6.400a1.500 1.500 0 0 0 1.500-1.500V5.800"/></svg>
  <!--TOOLBAR-->
</div>

<!-- PANEL -->
<div id="panel">
  <div class="abs" style="left:0;top:17px;width:356px;text-align:center;font-size:14.5px;font-weight:bold;letter-spacing:1.6px;color:#1f1f24;line-height:18px;transform:scaleX(.93)">ARTISTIC COLLAGE</div>
  <!-- ratio tabs -->
  <div class="abs" style="left:28px;top:56px;width:300px;height:34px;border:1px solid #d9d9e0;background:#ebebf1"></div>
  <div class="abs" style="left:127px;top:55px;width:101px;height:35px;background:#ab9856"></div>
  <div class="abs" style="left:28px;top:56px;width:99px;height:34px;line-height:34px;text-align:center;font-size:13px;font-weight:bold;color:#55555b;letter-spacing:.5px;word-spacing:-1.5px">4 : 3</div>
  <div class="abs" style="left:127px;top:56px;width:101px;height:34px;line-height:34px;text-align:center;font-size:13px;font-weight:bold;color:#fbf3d3;letter-spacing:.5px;word-spacing:-1.5px">9 : 16</div>
  <div class="abs" style="left:228px;top:56px;width:100px;height:34px;line-height:34px;text-align:center;font-size:13px;font-weight:bold;color:#55555b;letter-spacing:.5px;word-spacing:-1.5px">1 : 1</div>

  <!-- row 0 partial -->
  <div class="thumb" style="left:28px;top:100px;width:147px;height:21px;background:#fff">
    <div class="abs" style="left:0;top:0;width:67px;height:21px;background:#e8cd0f"></div>
    <div class="abs" style="left:24px;top:4px;font-size:10px;letter-spacing:-.8px;color:#6b5e10;line-height:12px">TO MOVE</div>
  </div>
  <div class="thumb" style="left:183px;top:100px;width:147px;height:21px;background:#fff">
    <div class="abs" style="left:42px;top:6px;width:63px;height:2px;background:#c9c9c9"></div>
  </div>
  <!-- T1 Father's Day -->
  <svg class="thumb" style="left:28px;top:128px" width="147" height="263" viewBox="0 0 147 263">
    <defs><filter id="b1" x="-5%" y="-5%" width="110%" height="110%"><feGaussianBlur stdDeviation="1.3"/></filter><filter id="b1s"><feGaussianBlur stdDeviation=".6"/></filter>
    <clipPath id="t1c"><rect width="147" height="263"/></clipPath></defs>
    <rect width="147" height="263" fill="#fff"/>
    <g clip-path="url(#t1c)"><g filter="url(#b1)">
      <!-- black upper diagonal band -->
      <path d="M66 58H150L106 122L92 100L60 86L52 82Z" fill="#0c0c0c"/>
      <path d="M70 62L110 62L84 92L58 84Z" fill="#2a2a2a"/>
      <!-- woman 1 hair & face -->
      <path d="M8 80Q14 60 32 62Q48 66 50 88L44 112L24 128L6 150L3 120Z" fill="#2b2b2b"/>
      <ellipse cx="27" cy="92" rx="11" ry="15" fill="#c9c9c9" transform="rotate(-18 27 92)"/>
      <path d="M4 120L22 126L10 152L2 158Z" fill="#8c8c8c"/>
      <path d="M2 128L20 112L32 130L4 168Z" fill="#d8d8d8" opacity=".7"/>
      <!-- man hair -->
      <path d="M30 118Q42 92 68 90Q98 90 104 112Q100 128 88 126L40 128Z" fill="#6d6d6d"/>
      <path d="M44 104Q62 88 90 98Q100 104 100 112L60 112Z" fill="#a5a5a5"/>
      <!-- man face -->
      <path d="M26 126Q28 112 52 112Q82 110 86 128L84 160Q76 190 54 192Q32 186 26 158Z" fill="#d2d2d2"/>
      <path d="M30 135h18M58 134h20" stroke="#3a3a3a" stroke-width="3"/>
      <path d="M40 170Q54 180 68 168L66 176Q54 184 42 176Z" fill="#fff"/>
      <path d="M26 150L24 168L30 170Z" fill="#efefef"/>
      <!-- woman 2 hair -->
      <path d="M92 128Q118 118 130 150L138 178L120 200L98 196Z" fill="#1e1e1e"/>
      <path d="M70 160Q84 146 104 150Q118 156 116 176L108 194L74 192Z" fill="#cfcfcf"/>
      <path d="M76 164h12M96 164h12" stroke="#2c2c2c" stroke-width="2.500"/>
      <!-- left black -->
      <path d="M0 166L26 136L30 170L36 200L30 226L0 232Z" fill="#101010"/>
      <path d="M0 232L34 214L44 263H0Z" fill="#6e6e6e"/>
      <path d="M4 240Q16 226 30 232L34 263H4Z" fill="#8f8f8f"/>
      <!-- man neck / jacket -->
      <path d="M36 190L56 194L52 220L34 222Z" fill="#bdbdbd"/>
      <path d="M32 200L52 190L58 214L40 263H24Z" fill="#1b1b1b"/>
      <!-- right black bottom -->
      <path d="M147 166L80 263H147Z" fill="#0e0e0e"/>
      <path d="M122 198Q134 190 138 206L136 236L124 234L118 214Z" fill="#7a7a7a"/>
      <path d="M104 244Q124 232 147 240V263H100Z" fill="#1c1c1c"/>
      <!-- flowers -->
      <path d="M34 224Q46 206 62 200Q80 176 100 184Q124 176 128 190L116 206L92 263H40Z" fill="#b9b9b9"/>
    </g>
    <!-- flower texture -->
    <g fill="#f2f2f2" filter="url(#b1s)">
      <circle cx="60" cy="208" r="4"/><circle cx="72" cy="198" r="4.500"/><circle cx="84" cy="192" r="4"/><circle cx="95" cy="188" r="3.500"/><circle cx="106" cy="190" r="3.500"/><circle cx="118" cy="186" r="4"/><circle cx="66" cy="220" r="4.500"/><circle cx="78" cy="212" r="5"/><circle cx="90" cy="204" r="4.500"/><circle cx="100" cy="200" r="4"/><circle cx="56" cy="230" r="4"/><circle cx="70" cy="236" r="5"/><circle cx="82" cy="226" r="5"/><circle cx="92" cy="218" r="4"/><circle cx="48" cy="240" r="4"/><circle cx="60" cy="248" r="4.500"/><circle cx="74" cy="250" r="4.500"/><circle cx="84" cy="240" r="4"/><circle cx="50" cy="256" r="4"/><circle cx="66" cy="260" r="4"/><circle cx="110" cy="198" r="3"/><circle cx="42" cy="226" r="3.500"/>
    </g>
    <g fill="#4a4a4a" filter="url(#b1s)"><circle cx="64" cy="214" r="2"/><circle cx="76" cy="205" r="2"/><circle cx="88" cy="198" r="1.800"/><circle cx="74" cy="228" r="2.200"/><circle cx="86" cy="233" r="2"/><circle cx="62" cy="240" r="2"/><circle cx="54" cy="248" r="2"/><circle cx="78" cy="243" r="2"/><circle cx="68" cy="255" r="2"/><circle cx="98" cy="194" r="1.600"/><circle cx="96" cy="210" r="2"/><circle cx="112" cy="192" r="1.500"/></g>
    </g>
    <!-- header text -->
    <text x="73.500" y="15.500" font-family="Liberation Sans" font-weight="bold" font-size="4.200" fill="#333" text-anchor="middle" letter-spacing=".3">HAVE A GREAT</text>
    <text x="73.500" y="31" font-family="Liberation Sans" font-weight="bold" font-size="13" fill="#151515" text-anchor="middle" textLength="68" lengthAdjust="spacingAndGlyphs">FATHER’S DAY</text>
    <path d="M50 43.500h46" stroke="#999" stroke-width=".8" stroke-dasharray="3 1.200"/>
    <!-- flower -->
    <path d="M52 66V52" stroke="#d9d9d9" stroke-width=".8"/>
    <path d="M50 55l6-3 4 5M58 62l8-4M88 58l8-6 5 2M86 62l10 0" stroke="#a9c23a" stroke-width="2.200" fill="none" stroke-linecap="round"/>
    <circle cx="73" cy="56.500" r="7.200" fill="#ea6b73"/><circle cx="72" cy="55" r="3.500" fill="#f08a8c"/>
    <!-- bookmark -->
    <path d="M123 0h15.500v21l-7.700-3.500L123 21Z" fill="#a6955a"/>
    <path d="M127 7h7.500l2 2.500-5.700 5.500-5.800-5.500z" fill="#fff" opacity=".9"/>
  </svg>
  <!-- T2 BFF -->
  <svg class="thumb" style="left:183px;top:128px" width="147" height="263" viewBox="0 0 147 263">
    <defs><filter id="b2" x="-5%" y="-5%" width="110%" height="110%"><feGaussianBlur stdDeviation="1.400"/></filter>
    <linearGradient id="teal" x1="0" y1="0" x2=".3" y2="1"><stop offset="0" stop-color="#136a80"/><stop offset=".5" stop-color="#1f8093"/><stop offset="1" stop-color="#2a8c9c"/></linearGradient>
    <clipPath id="t2l"><path d="M4 4H146L61 225V259H4Z"/></clipPath>
    <clipPath id="t2r"><path d="M146.500 6L143.500 4.500V259H62V226Z"/></clipPath></defs>
    <rect width="147" height="263" fill="#fbfbfc"/>
    <g clip-path="url(#t2l)"><g filter="url(#b2)">
      <rect x="0" y="0" width="150" height="263" fill="url(#teal)"/>
      <!-- top hand -->
      <path d="M97 4H150V70L110 82Q96 90 84 84L66 62L52 46Q74 30 97 4Z" fill="#ebdcc8"/>
      <path d="M112 4H150V36L118 50Z" fill="#dccab2"/>
      <path d="M72 66Q84 56 96 66Q100 82 88 90Q76 88 72 78Z" fill="#f0b8b0"/>
      <!-- left hand -->
      <path d="M0 44Q20 34 40 44L54 66L50 110Q40 136 20 140L0 142Z" fill="#efd6c8"/>
      <path d="M0 118Q24 120 48 112L40 136L0 142Z" fill="#e2a9a0"/>
      <!-- phone -->
      <path d="M24 62L50 45L96 126L80 166L68 150L62 120L40 100Z" fill="#0c1322"/>
      <path d="M52 46L60 42L100 112L96 124Z" fill="#c8d4da"/>
      <!-- finger bottom -->
      <ellipse cx="64" cy="180" rx="16" ry="13" fill="#f3e6dc"/>
    </g></g>
    <g clip-path="url(#t2r)"><g filter="url(#b2)">
      <rect x="50" y="0" width="100" height="263" fill="#dfe6ea"/>
      <!-- sky / top -->
      <path d="M120 0H150V60L126 66Z" fill="#4aa0b8"/>
      <!-- man head -->
      <path d="M112 70Q120 50 150 52V124L126 124Q112 108 112 86Z" fill="#bf8d6c"/>
      <path d="M118 62Q130 46 150 48V72L128 70Z" fill="#2a1d18"/>
      <path d="M112 84L140 80L142 92L116 96Z" fill="#1d1a1c"/>
      <path d="M120 104Q128 112 138 106L136 114Q128 118 122 112Z" fill="#fff"/>
      <path d="M124 114Q134 124 150 116V132L130 130Z" fill="#3a2820"/>
      <!-- shirt -->
      <path d="M70 200Q80 150 110 128L150 132V230L70 232Z" fill="#e4ecf0"/>
      <path d="M112 150Q126 170 120 210L108 214Q114 180 104 160Z" fill="#a9c6d4"/>
      <path d="M128 124Q140 140 150 136V176Q138 178 130 164Z" fill="#6f98ac"/>
      <!-- hand -->
      <path d="M130 150Q142 144 150 150V180Q138 184 130 172Z" fill="#e59060"/>
      <!-- bottom arms -->
      <path d="M62 226Q90 214 120 216L150 204V263H62Z" fill="#e3a988"/>
      <path d="M62 244Q90 236 112 244L110 263H62Z" fill="#d9e4e6"/>
      <path d="M66 234Q84 226 100 230L98 238L66 246Z" fill="#c47a50"/>
      <path d="M128 220Q140 214 150 218V250L132 252Z" fill="#f0c0a0"/>
      <path d="M134 238Q140 234 144 240L142 258L134 256Z" fill="#4a8090"/>
    </g></g>
    <!-- BFF box -->
    <rect x="4" y="217" width="55" height="42" fill="#fcfcfc"/>
    <text x="17" y="240" font-family="Liberation Sans" font-weight="bold" font-size="14" fill="#e06d55" textLength="28.500" lengthAdjust="spacingAndGlyphs">BFF</text>
    <path d="M13 250h37M13 253.500h33" stroke="#efb8ac" stroke-width="1"/>
  </svg>
  <!-- T3 Style and Pose -->
  <svg class="thumb" style="left:28px;top:399px" width="147" height="261" viewBox="0 0 147 261">
    <defs><filter id="b3" x="-5%" y="-5%" width="110%" height="110%"><feGaussianBlur stdDeviation="1"/></filter>
    <clipPath id="p31"><rect x="48" y="69.500" width="92" height="82.500"/></clipPath>
    <clipPath id="p32"><rect x="11.700" y="158.300" width="74" height="91.700"/></clipPath>
    <linearGradient id="g31" x1="0" y1="0" x2="0" y2="1"><stop offset="0" stop-color="#e2e2e2"/><stop offset=".45" stop-color="#cfcfcf"/><stop offset=".55" stop-color="#a2a2a2"/><stop offset="1" stop-color="#8e8e8e"/></linearGradient></defs>
    <rect width="147" height="261" fill="#3c3c40"/>
    <rect x="5.400" y="7.400" width="4.300" height="9.200" fill="#e8452c"/>
    <!-- photo 1 -->
    <g clip-path="url(#p31)"><g filter="url(#b3)">
      <rect x="44" y="66" width="100" height="90" fill="url(#g31)"/>
      <rect x="48" y="69" width="40" height="40" fill="#ededed"/>
      <path d="M52 92v22M62 90v24M74 92v20M84 88v24" stroke="#6f6f6f" stroke-width="1.600"/>
      <rect x="48" y="96" width="30" height="6" fill="#5c5c5c" opacity=".6"/>
      <!-- woman -->
      <path d="M106 84Q112 78 120 84L119 88L107 88Z" fill="#1c1c1c"/>
      <path d="M100 88L128 87L127 90L101 91Z" fill="#222"/>
      <ellipse cx="113.500" cy="94" rx="5" ry="6" fill="#b9b9b9"/>
      <path d="M102 100Q112 96 124 102L132 130L126 152H96L100 128Z" fill="#262626"/>
      <path d="M118 100Q124 92 122 104Z" fill="#d0d0d0"/>
      <path d="M108 124h10v6h-10z" fill="#c8c8c8"/>
      <path d="M124 128l4 10-3 2z" fill="#c8c8c8"/>
    </g></g>
    <!-- red outline + text -->
    <rect x="12.800" y="19" width="81.500" height="72" fill="none" stroke="#d8412f" stroke-width="1"/>
    <g font-family="Liberation Sans" font-size="21.500" fill="#e2473a">
      <text x="16" y="39.500" textLength="69" lengthAdjust="spacingAndGlyphs">STYLE</text>
      <text x="16" y="62.500" textLength="46" lengthAdjust="spacingAndGlyphs">AND</text>
      <text x="16" y="85.500" textLength="32" lengthAdjust="spacingAndGlyphs">PO</text>
      <text x="49" y="85.500" textLength="28" lengthAdjust="spacingAndGlyphs" fill="#fff">SE</text>
    </g>
    <!-- photo 2 -->
    <g clip-path="url(#p32)"><g filter="url(#b3)">
      <rect x="8" y="154" width="82" height="100" fill="#e7e7e7"/>
      <rect x="8" y="154" width="20" height="100" fill="#f3f3f3"/>
      <ellipse cx="51" cy="169" rx="12.500" ry="3.600" fill="#141414"/>
      <path d="M44 168Q44 160 51 160Q58 160 58 168Z" fill="#141414"/>
      <ellipse cx="51" cy="175" rx="4.500" ry="5" fill="#8a8a8a"/>
      <path d="M34 190Q50 180 68 190L72 214L64 252H30L32 214Z" fill="#161616"/>
      <path d="M46 182h10v12h-10z" fill="#222"/>
      <path d="M50 200l5-3 1 8-5 2z" fill="#dcdcdc"/>
      <path d="M40 214l8 38h6l2-38z" fill="#2a2a2a"/>
    </g></g>
    <!-- red box -->
    <rect x="109.600" y="206.400" width="29.500" height="43" fill="#cf4131"/>
    <g stroke="#f6d6cf" stroke-width="1.300" opacity=".9"><path d="M113 214.500h22M113 221.500h22M117 233.500h14M119 240h10"/></g>
  </svg>
  <!-- T4 Happy New Year -->
  <svg class="thumb" style="left:183px;top:399px" width="147" height="261" viewBox="0 0 147 261">
    <defs><filter id="b4" x="-5%" y="-5%" width="110%" height="110%"><feGaussianBlur stdDeviation="1.200"/></filter><filter id="b4b"><feGaussianBlur stdDeviation="5"/></filter><filter id="b4c"><feGaussianBlur stdDeviation=".55"/></filter>
    <clipPath id="t4c"><rect width="147" height="261"/></clipPath><clipPath id="t4d"><rect y="130" width="147" height="131"/></clipPath></defs>
    <rect width="147" height="131" fill="#f20b08"/>
    <g filter="url(#b4b)" opacity=".55"><ellipse cx="98" cy="62" rx="26" ry="20" fill="#c90000"/><ellipse cx="122" cy="44" rx="14" ry="10" fill="#d40000"/><ellipse cx="116" cy="108" rx="22" ry="14" fill="#d80404"/></g>
    <g clip-path="url(#t4d)">
      <rect y="130" width="147" height="131" fill="#17100a"/>
      <g filter="url(#b4c)">
      <rect y="130" width="147" height="46" fill="#7c5f1e"/>
      <rect x="0.0" y="130" width="2.2" height="39.9" fill="#6a5018" opacity="0.94"/>
      <rect x="2.5" y="130" width="3.0" height="43.9" fill="#6a5018" opacity="0.92"/>
      <rect x="5.6" y="130" width="1.9" height="41.9" fill="#57400f" opacity="0.96"/>
      <rect x="8.3" y="130" width="2.6" height="51.2" fill="#b8902e" opacity="0.86"/>
      <rect x="11.6" y="130" width="1.6" height="48.3" fill="#3e2d0c" opacity="0.63"/>
      <rect x="13.2" y="130" width="3.2" height="47.1" fill="#3e2d0c" opacity="0.73"/>
      <rect x="17.1" y="130" width="1.6" height="44.1" fill="#c8a040" opacity="0.80"/>
      <rect x="19.6" y="130" width="2.3" height="38.9" fill="#8a6a20" opacity="0.82"/>
      <rect x="22.9" y="130" width="1.4" height="36.9" fill="#8a6a20" opacity="0.69"/>
      <rect x="24.7" y="130" width="1.4" height="38.8" fill="#57400f" opacity="0.94"/>
      <rect x="26.5" y="130" width="3.4" height="34.7" fill="#3e2d0c" opacity="0.97"/>
      <rect x="30.0" y="130" width="2.1" height="39.2" fill="#b8902e" opacity="0.83"/>
      <rect x="32.3" y="130" width="2.8" height="31.9" fill="#2a1e08" opacity="0.73"/>
      <rect x="36.2" y="130" width="2.9" height="33.0" fill="#57400f" opacity="0.88"/>
      <rect x="39.1" y="130" width="2.3" height="33.9" fill="#6a5018" opacity="0.82"/>
      <rect x="42.0" y="130" width="1.6" height="39.2" fill="#a8842e" opacity="0.75"/>
      <rect x="44.1" y="130" width="3.5" height="35.9" fill="#3e2d0c" opacity="0.99"/>
      <rect x="48.5" y="130" width="1.9" height="34.6" fill="#3e2d0c" opacity="0.76"/>
      <rect x="51.4" y="130" width="2.7" height="30.9" fill="#57400f" opacity="0.66"/>
      <rect x="54.6" y="130" width="1.2" height="48.3" fill="#2a1e08" opacity="0.75"/>
      <rect x="55.9" y="130" width="1.7" height="30.3" fill="#c8a040" opacity="0.75"/>
      <rect x="58.4" y="130" width="1.5" height="48.3" fill="#6a5018" opacity="0.65"/>
      <rect x="60.3" y="130" width="2.6" height="50.0" fill="#8a6a20" opacity="0.93"/>
      <rect x="63.3" y="130" width="1.6" height="45.1" fill="#c8a040" opacity="0.76"/>
      <rect x="65.5" y="130" width="1.4" height="32.3" fill="#3e2d0c" opacity="0.62"/>
      <rect x="68.0" y="130" width="1.7" height="35.7" fill="#b8902e" opacity="0.93"/>
      <rect x="70.5" y="130" width="1.9" height="50.4" fill="#a8842e" opacity="0.99"/>
      <rect x="72.5" y="130" width="2.3" height="36.2" fill="#57400f" opacity="0.97"/>
      <rect x="75.1" y="130" width="1.2" height="39.1" fill="#8a6a20" opacity="0.70"/>
      <rect x="76.4" y="130" width="1.8" height="32.0" fill="#a8842e" opacity="0.66"/>
      <rect x="78.7" y="130" width="2.0" height="43.0" fill="#a8842e" opacity="0.97"/>
      <rect x="81.3" y="130" width="2.0" height="51.2" fill="#8a6a20" opacity="0.61"/>
      <rect x="84.1" y="130" width="2.3" height="37.0" fill="#8a6a20" opacity="1.00"/>
      <rect x="86.5" y="130" width="2.5" height="49.8" fill="#3e2d0c" opacity="0.89"/>
      <rect x="89.8" y="130" width="3.0" height="37.7" fill="#2a1e08" opacity="0.87"/>
      <rect x="93.9" y="130" width="3.2" height="50.8" fill="#b8902e" opacity="0.61"/>
      <rect x="97.7" y="130" width="1.2" height="38.3" fill="#b8902e" opacity="0.60"/>
      <rect x="99.0" y="130" width="1.4" height="51.9" fill="#57400f" opacity="0.95"/>
      <rect x="101.3" y="130" width="2.1" height="39.7" fill="#6a5018" opacity="0.94"/>
      <rect x="103.5" y="130" width="2.9" height="36.8" fill="#3e2d0c" opacity="0.64"/>
      <rect x="106.4" y="130" width="3.4" height="40.9" fill="#57400f" opacity="0.85"/>
      <rect x="110.9" y="130" width="1.8" height="38.1" fill="#3e2d0c" opacity="0.66"/>
      <rect x="113.4" y="130" width="2.4" height="44.5" fill="#2a1e08" opacity="0.78"/>
      <rect x="116.9" y="130" width="2.0" height="34.4" fill="#8a6a20" opacity="0.77"/>
      <rect x="119.8" y="130" width="3.3" height="38.5" fill="#c8a040" opacity="0.83"/>
      <rect x="123.5" y="130" width="1.5" height="37.7" fill="#6a5018" opacity="0.96"/>
      <rect x="125.1" y="130" width="1.3" height="48.1" fill="#8a6a20" opacity="0.65"/>
      <rect x="127.0" y="130" width="3.3" height="38.4" fill="#b8902e" opacity="0.81"/>
      <rect x="131.1" y="130" width="2.8" height="37.0" fill="#6a5018" opacity="0.93"/>
      <rect x="134.3" y="130" width="2.6" height="42.6" fill="#8a6a20" opacity="0.72"/>
      <rect x="137.9" y="130" width="1.2" height="38.9" fill="#a8842e" opacity="0.68"/>
      <rect x="140.0" y="130" width="1.8" height="47.5" fill="#a8842e" opacity="0.99"/>
      <rect x="142.0" y="130" width="1.5" height="51.1" fill="#2a1e08" opacity="0.87"/>
      <rect x="143.7" y="130" width="2.3" height="45.7" fill="#a8842e" opacity="0.90"/>
      <rect x="146.6" y="130" width="1.3" height="36.0" fill="#c8a040" opacity="0.74"/>
      <rect x="0" y="130" width="17" height="60" fill="#c99a32" opacity=".55"/>
      </g>
      <g filter="url(#b4)">
        <rect y="172" width="147" height="14" fill="#2a1d0a" opacity=".75"/>
        <path d="M0 196Q14 180 30 190L44 204L56 261H0Z" fill="#120d08"/>
        <path d="M18 196Q26 186 34 194L32 208L22 210Z" fill="#c8862e"/>
        <path d="M38 196Q48 188 58 196L54 208L42 208Z" fill="#d8962e"/>
        <path d="M0 240Q7 234 11 244L10 261H0Z" fill="#c02418"/>
        <path d="M90 176Q108 154 134 170Q147 184 147 226V261H112L96 232L88 200Z" fill="#120c08"/>
        <path d="M99 186Q104 168 118 171Q124 178 122 194Q118 210 109 210Q99 206 99 196Z" fill="#c98c4c"/>
        <path d="M101 184h7M112 185h6" stroke="#2a1808" stroke-width="1.600"/>
        <path d="M75 203Q88 193 104 198L113 208L100 218L80 215Z" fill="#d09850"/>
        <path d="M84 218Q96 212 111 218L111 261H84Z" fill="#bf7a30"/>
        <path d="M56 232Q70 224 84 232L84 261H58Z" fill="#1f1408"/>
      </g>
      <g filter="url(#b4c)"><circle cx="76.5" cy="228.2" r="2.4" fill="#ffe08a" opacity="0.73"/><circle cx="116.4" cy="253.0" r="0.7" fill="#e0902a" opacity="0.97"/><circle cx="92.0" cy="253.3" r="1.3" fill="#fff0c0" opacity="0.76"/><circle cx="95.7" cy="193.4" r="2.0" fill="#e8a92e" opacity="0.65"/><circle cx="132.3" cy="259.3" r="1.1" fill="#fff0c0" opacity="0.67"/><circle cx="5.5" cy="205.1" r="1.3" fill="#f7d070" opacity="0.77"/><circle cx="4.2" cy="244.8" r="0.7" fill="#e0902a" opacity="0.91"/><circle cx="25.4" cy="204.5" r="2.4" fill="#ffe08a" opacity="0.76"/><circle cx="147.0" cy="252.5" r="1.6" fill="#c8c0a0" opacity="0.98"/><circle cx="72.4" cy="256.7" r="0.7" fill="#d89a2a" opacity="0.75"/><circle cx="82.1" cy="246.6" r="1.6" fill="#ffe08a" opacity="0.79"/><circle cx="124.0" cy="223.6" r="1.1" fill="#e0902a" opacity="0.98"/><circle cx="127.9" cy="227.8" r="1.1" fill="#ffe08a" opacity="0.99"/><circle cx="77.1" cy="224.7" r="0.9" fill="#e0902a" opacity="0.79"/><circle cx="74.0" cy="227.4" r="0.7" fill="#f3c24a" opacity="0.78"/><circle cx="58.9" cy="244.1" r="1.6" fill="#e8a92e" opacity="0.77"/><circle cx="60.8" cy="257.3" r="1.3" fill="#f7d070" opacity="0.66"/><circle cx="72.5" cy="204.9" r="2.4" fill="#c8c0a0" opacity="0.79"/><circle cx="16.0" cy="211.7" r="0.7" fill="#f7d070" opacity="0.61"/><circle cx="33.4" cy="234.4" r="1.1" fill="#fff0c0" opacity="0.66"/><circle cx="73.3" cy="218.5" r="1.6" fill="#e8a92e" opacity="0.93"/><circle cx="91.7" cy="237.0" r="2.0" fill="#e0902a" opacity="0.56"/><circle cx="93.1" cy="246.1" r="1.6" fill="#ffe08a" opacity="0.79"/><circle cx="127.0" cy="221.4" r="0.9" fill="#d89a2a" opacity="0.93"/><circle cx="89.9" cy="248.8" r="0.9" fill="#fff0c0" opacity="0.96"/><circle cx="46.4" cy="202.8" r="0.9" fill="#d89a2a" opacity="0.90"/><circle cx="28.6" cy="184.2" r="0.9" fill="#ffe08a" opacity="0.88"/><circle cx="38.1" cy="184.2" r="2.4" fill="#e0902a" opacity="0.79"/><circle cx="52.6" cy="245.8" r="1.1" fill="#e8a92e" opacity="0.87"/><circle cx="93.3" cy="205.2" r="2.0" fill="#d89a2a" opacity="0.91"/><circle cx="70.9" cy="178.1" r="2.4" fill="#c8c0a0" opacity="0.62"/><circle cx="27.1" cy="193.3" r="2.4" fill="#ffe08a" opacity="1.00"/><circle cx="136.3" cy="184.1" r="0.7" fill="#ffe08a" opacity="0.98"/><circle cx="67.9" cy="241.0" r="1.1" fill="#e0902a" opacity="0.76"/><circle cx="75.7" cy="212.6" r="1.6" fill="#fff0c0" opacity="0.56"/><circle cx="103.1" cy="247.8" r="0.9" fill="#e0902a" opacity="0.75"/><circle cx="108.7" cy="210.5" r="0.9" fill="#ffe08a" opacity="0.59"/><circle cx="123.8" cy="250.4" r="2.0" fill="#e0902a" opacity="0.81"/><circle cx="28.1" cy="225.7" r="1.1" fill="#f7d070" opacity="0.68"/><circle cx="17.1" cy="239.2" r="0.9" fill="#e0902a" opacity="0.61"/><circle cx="48.5" cy="221.8" r="1.1" fill="#e0902a" opacity="0.89"/><circle cx="59.6" cy="237.4" r="0.7" fill="#fff0c0" opacity="0.69"/><circle cx="14.8" cy="251.5" r="2.0" fill="#f3c24a" opacity="0.65"/><circle cx="138.9" cy="232.6" r="1.1" fill="#d89a2a" opacity="0.85"/><circle cx="83.7" cy="221.3" r="1.3" fill="#c8c0a0" opacity="0.84"/><circle cx="103.1" cy="240.7" r="1.6" fill="#f3c24a" opacity="0.60"/><circle cx="15.9" cy="196.1" r="1.3" fill="#e0902a" opacity="0.78"/><circle cx="111.9" cy="231.1" r="0.7" fill="#e8a92e" opacity="0.67"/><circle cx="40.5" cy="205.0" r="1.6" fill="#e0902a" opacity="0.99"/><circle cx="83.5" cy="260.6" r="2.0" fill="#c8c0a0" opacity="0.91"/><circle cx="11.2" cy="226.8" r="2.4" fill="#f3c24a" opacity="0.72"/><circle cx="138.0" cy="208.8" r="0.9" fill="#c8c0a0" opacity="0.79"/><circle cx="87.7" cy="212.5" r="1.3" fill="#e0902a" opacity="0.68"/><circle cx="58.6" cy="202.6" r="1.6" fill="#f7d070" opacity="0.77"/><circle cx="39.7" cy="255.0" r="2.0" fill="#f7d070" opacity="0.56"/><circle cx="113.6" cy="225.8" r="2.0" fill="#ffe08a" opacity="0.73"/><circle cx="58.5" cy="225.4" r="2.0" fill="#fff0c0" opacity="0.58"/><circle cx="133.1" cy="212.5" r="1.3" fill="#f7d070" opacity="0.99"/><circle cx="35.8" cy="220.5" r="2.4" fill="#c8c0a0" opacity="0.61"/><circle cx="141.1" cy="196.8" r="2.0" fill="#e8a92e" opacity="0.57"/><circle cx="61.3" cy="186.0" r="2.4" fill="#f3c24a" opacity="0.71"/><circle cx="22.7" cy="206.9" r="0.9" fill="#e0902a" opacity="0.75"/><circle cx="38.5" cy="225.5" r="1.3" fill="#fff0c0" opacity="0.90"/><circle cx="78.0" cy="260.8" r="1.1" fill="#ffe08a" opacity="0.66"/><circle cx="16.7" cy="251.9" r="2.4" fill="#fff0c0" opacity="0.67"/><circle cx="89.6" cy="237.6" r="2.0" fill="#d89a2a" opacity="0.83"/><circle cx="144.0" cy="253.8" r="2.0" fill="#f3c24a" opacity="0.83"/><circle cx="1.4" cy="198.1" r="0.7" fill="#f3c24a" opacity="0.60"/><circle cx="79.6" cy="182.2" r="0.7" fill="#ffe08a" opacity="0.80"/><circle cx="92.8" cy="207.7" r="1.3" fill="#fff0c0" opacity="0.64"/><circle cx="50.5" cy="239.3" r="2.4" fill="#e8a92e" opacity="0.91"/><circle cx="65.8" cy="245.9" r="2.4" fill="#d89a2a" opacity="0.75"/><circle cx="109.9" cy="209.2" r="0.9" fill="#fff0c0" opacity="0.62"/><circle cx="122.9" cy="226.7" r="1.1" fill="#ffe08a" opacity="0.74"/><circle cx="54.3" cy="184.2" r="1.1" fill="#e8a92e" opacity="0.79"/><circle cx="63.5" cy="224.3" r="2.4" fill="#c8c0a0" opacity="0.68"/><circle cx="97.3" cy="182.9" r="1.1" fill="#c8c0a0" opacity="0.88"/><circle cx="52.6" cy="237.7" r="1.1" fill="#e8a92e" opacity="0.70"/><circle cx="64.8" cy="226.6" r="2.0" fill="#f7d070" opacity="0.75"/><circle cx="58.7" cy="255.4" r="1.6" fill="#d89a2a" opacity="0.59"/><circle cx="86.0" cy="243.7" r="2.0" fill="#fff0c0" opacity="0.91"/><circle cx="79.5" cy="247.1" r="1.6" fill="#ffe08a" opacity="0.63"/><circle cx="111.6" cy="250.9" r="1.1" fill="#f3c24a" opacity="0.65"/><circle cx="8.5" cy="189.5" r="1.1" fill="#f3c24a" opacity="0.84"/><circle cx="108.3" cy="252.4" r="0.7" fill="#f3c24a" opacity="0.84"/><circle cx="21.2" cy="239.4" r="2.0" fill="#e0902a" opacity="0.66"/><circle cx="32.4" cy="241.1" r="1.6" fill="#fff0c0" opacity="0.89"/><circle cx="58.0" cy="204.7" r="1.1" fill="#ffe08a" opacity="0.77"/><circle cx="79.0" cy="237.3" r="2.0" fill="#f3c24a" opacity="0.73"/><circle cx="121.5" cy="232.7" r="2.4" fill="#f3c24a" opacity="0.91"/><circle cx="122.6" cy="251.5" r="1.6" fill="#f3c24a" opacity="0.79"/><circle cx="104.4" cy="244.2" r="1.3" fill="#e0902a" opacity="0.96"/><circle cx="36.1" cy="189.8" r="2.0" fill="#e0902a" opacity="0.86"/><circle cx="47.2" cy="209.1" r="1.6" fill="#f7d070" opacity="0.67"/><circle cx="130.3" cy="216.1" r="2.0" fill="#e8a92e" opacity="0.69"/><circle cx="22.9" cy="254.2" r="0.7" fill="#c8c0a0" opacity="0.56"/><circle cx="70.7" cy="244.0" r="1.1" fill="#e8a92e" opacity="0.64"/><circle cx="52.8" cy="226.0" r="1.6" fill="#c8c0a0" opacity="0.82"/><circle cx="32.9" cy="191.7" r="1.1" fill="#e0902a" opacity="0.63"/><circle cx="120.1" cy="216.8" r="1.1" fill="#c8c0a0" opacity="0.95"/><circle cx="134.4" cy="205.1" r="1.6" fill="#e8a92e" opacity="0.77"/><circle cx="32.5" cy="180.2" r="0.9" fill="#e0902a" opacity="0.99"/><circle cx="116.8" cy="241.8" r="2.4" fill="#f3c24a" opacity="0.85"/><circle cx="34.9" cy="176.9" r="1.3" fill="#fff0c0" opacity="0.75"/><circle cx="36.2" cy="211.8" r="2.4" fill="#ffe08a" opacity="0.74"/><circle cx="113.5" cy="188.3" r="2.4" fill="#ffe08a" opacity="0.84"/><circle cx="146.0" cy="198.7" r="1.6" fill="#f3c24a" opacity="0.62"/><circle cx="113.2" cy="176.1" r="2.4" fill="#ffe08a" opacity="0.92"/><circle cx="12.1" cy="198.9" r="2.0" fill="#e8a92e" opacity="0.95"/><circle cx="79.9" cy="219.0" r="0.7" fill="#d89a2a" opacity="0.74"/><circle cx="134.8" cy="183.7" r="2.4" fill="#c8c0a0" opacity="0.64"/><circle cx="79.9" cy="220.7" r="0.9" fill="#f7d070" opacity="0.69"/><circle cx="59.6" cy="223.3" r="1.3" fill="#e8a92e" opacity="0.71"/><circle cx="67.9" cy="258.2" r="2.4" fill="#e8a92e" opacity="0.84"/><circle cx="1.8" cy="208.1" r="2.0" fill="#c8c0a0" opacity="0.66"/><circle cx="82.9" cy="214.9" r="0.7" fill="#d89a2a" opacity="0.96"/><circle cx="22.4" cy="229.4" r="1.6" fill="#f7d070" opacity="0.98"/><circle cx="111.0" cy="223.2" r="0.7" fill="#f7d070" opacity="0.63"/><circle cx="55.4" cy="185.3" r="1.1" fill="#f7d070" opacity="0.80"/><circle cx="106.4" cy="204.2" r="0.7" fill="#e8a92e" opacity="0.61"/><circle cx="13.9" cy="233.6" r="2.0" fill="#ffe08a" opacity="0.63"/><circle cx="59.1" cy="247.1" r="1.6" fill="#e8a92e" opacity="0.60"/><circle cx="4.8" cy="259.9" r="1.3" fill="#e0902a" opacity="0.90"/><circle cx="50.2" cy="246.0" r="1.6" fill="#ffe08a" opacity="0.84"/><circle cx="112.7" cy="245.8" r="1.3" fill="#c8c0a0" opacity="0.70"/><circle cx="60.6" cy="177.3" r="1.3" fill="#fff0c0" opacity="0.99"/><circle cx="116.1" cy="232.1" r="1.6" fill="#f3c24a" opacity="0.67"/><circle cx="27.7" cy="202.1" r="1.3" fill="#e8a92e" opacity="0.80"/><circle cx="30.1" cy="204.3" r="1.1" fill="#e8a92e" opacity="0.83"/><circle cx="23.3" cy="241.2" r="1.1" fill="#d89a2a" opacity="0.71"/><circle cx="73.6" cy="188.0" r="2.0" fill="#d89a2a" opacity="0.99"/><circle cx="75.9" cy="236.8" r="2.4" fill="#d89a2a" opacity="0.81"/><circle cx="3.9" cy="232.1" r="2.4" fill="#e8a92e" opacity="0.61"/><circle cx="70.2" cy="211.5" r="1.1" fill="#fff0c0" opacity="0.59"/><circle cx="128.3" cy="198.6" r="0.7" fill="#c8c0a0" opacity="0.99"/><circle cx="19.9" cy="252.8" r="1.6" fill="#e8a92e" opacity="0.80"/><circle cx="38.9" cy="253.3" r="2.4" fill="#fff0c0" opacity="0.82"/><circle cx="18.0" cy="246.1" r="1.1" fill="#fff0c0" opacity="0.66"/><circle cx="84.3" cy="246.6" r="0.9" fill="#e8a92e" opacity="0.75"/><circle cx="59.3" cy="242.5" r="2.0" fill="#ffe08a" opacity="0.69"/><circle cx="98.7" cy="238.7" r="1.3" fill="#f3c24a" opacity="0.62"/><circle cx="60.6" cy="178.8" r="1.6" fill="#e0902a" opacity="0.60"/><circle cx="59.6" cy="204.6" r="0.9" fill="#f7d070" opacity="0.66"/><circle cx="137.0" cy="180.5" r="2.4" fill="#f3c24a" opacity="0.87"/><circle cx="115.8" cy="210.3" r="1.3" fill="#e8a92e" opacity="0.76"/><circle cx="60.5" cy="229.0" r="2.0" fill="#e0902a" opacity="0.89"/><circle cx="71.4" cy="260.5" r="2.4" fill="#e0902a" opacity="0.92"/><circle cx="17.3" cy="185.7" r="1.6" fill="#fff0c0" opacity="0.79"/><circle cx="63.5" cy="252.9" r="1.1" fill="#f3c24a" opacity="0.68"/><circle cx="90.6" cy="212.8" r="1.3" fill="#fff0c0" opacity="0.89"/><circle cx="44.8" cy="226.4" r="0.7" fill="#d89a2a" opacity="0.61"/><circle cx="65.7" cy="218.7" r="1.3" fill="#f3c24a" opacity="0.76"/><circle cx="15.5" cy="175.7" r="1.3" fill="#e8b040" opacity="0.87"/><circle cx="129.3" cy="180.0" r="1.3" fill="#e8b040" opacity="0.68"/><circle cx="24.1" cy="163.2" r="1.6" fill="#f3c24a" opacity="0.85"/><circle cx="14.5" cy="170.0" r="0.8" fill="#e8b040" opacity="0.40"/><circle cx="35.9" cy="146.4" r="1.3" fill="#ffe08a" opacity="0.43"/><circle cx="131.6" cy="171.1" r="1.6" fill="#ffe08a" opacity="0.58"/><circle cx="86.1" cy="134.2" r="0.8" fill="#e8b040" opacity="0.85"/><circle cx="45.3" cy="155.9" r="1.6" fill="#ffe08a" opacity="0.50"/><circle cx="126.3" cy="165.2" r="0.8" fill="#ffe08a" opacity="0.56"/><circle cx="126.3" cy="175.2" r="0.8" fill="#ffe08a" opacity="0.72"/><circle cx="102.6" cy="158.9" r="1.0" fill="#ffe08a" opacity="0.87"/><circle cx="143.5" cy="163.2" r="1.3" fill="#f7d070" opacity="0.88"/><circle cx="40.3" cy="152.2" r="1.0" fill="#f7d070" opacity="0.75"/><circle cx="137.9" cy="153.4" r="0.8" fill="#ffe08a" opacity="0.51"/><circle cx="45.2" cy="166.1" r="1.0" fill="#f7d070" opacity="0.49"/><circle cx="34.6" cy="163.9" r="1.3" fill="#f7d070" opacity="0.80"/><circle cx="77.1" cy="137.6" r="1.0" fill="#f7d070" opacity="0.85"/><circle cx="26.5" cy="142.8" r="1.0" fill="#f3c24a" opacity="0.63"/><circle cx="11.2" cy="176.0" r="0.8" fill="#f3c24a" opacity="0.40"/><circle cx="86.2" cy="157.8" r="1.6" fill="#f3c24a" opacity="0.48"/><circle cx="145.3" cy="141.1" r="1.0" fill="#f7d070" opacity="0.77"/><circle cx="4.2" cy="169.9" r="1.0" fill="#f3c24a" opacity="0.71"/><circle cx="134.7" cy="160.1" r="0.8" fill="#e8b040" opacity="0.43"/><circle cx="9.4" cy="169.3" r="1.3" fill="#f7d070" opacity="0.73"/><circle cx="115.1" cy="156.8" r="1.0" fill="#ffe08a" opacity="0.46"/><circle cx="64.0" cy="164.1" r="1.3" fill="#ffe08a" opacity="0.53"/><circle cx="80.0" cy="172.9" r="1.6" fill="#f7d070" opacity="0.42"/><circle cx="87.7" cy="166.3" r="1.6" fill="#ffe08a" opacity="0.56"/><circle cx="89.4" cy="161.2" r="1.6" fill="#e8b040" opacity="0.76"/><circle cx="125.9" cy="133.5" r="0.8" fill="#ffe08a" opacity="0.68"/><circle cx="79.9" cy="170.0" r="1.0" fill="#ffe08a" opacity="0.43"/><circle cx="62.5" cy="165.4" r="1.3" fill="#e8b040" opacity="0.44"/><circle cx="120.6" cy="140.2" r="1.3" fill="#ffe08a" opacity="0.48"/><circle cx="101.5" cy="171.9" r="1.6" fill="#f3c24a" opacity="0.56"/><circle cx="68.6" cy="165.5" r="0.8" fill="#ffe08a" opacity="0.64"/><circle cx="111.9" cy="179.3" r="1.0" fill="#e8b040" opacity="0.66"/><circle cx="144.9" cy="132.2" r="1.6" fill="#ffe08a" opacity="0.45"/><circle cx="81.7" cy="154.7" r="0.8" fill="#f3c24a" opacity="0.74"/><circle cx="105.4" cy="178.9" r="1.0" fill="#f7d070" opacity="0.53"/><circle cx="81.1" cy="143.6" r="1.6" fill="#f3c24a" opacity="0.87"/></g>
    </g>
    <rect x="16.600" y="79.600" width="65.300" height="101.600" fill="#fff"/>
    <g font-family="Liberation Sans" font-weight="bold" font-style="italic" font-size="14.500" fill="#6e4c34">
      <text x="23.500" y="107" textLength="35" lengthAdjust="spacingAndGlyphs">Happy</text>
      <text x="23.500" y="137" textLength="24" lengthAdjust="spacingAndGlyphs">New</text>
      <text x="23.500" y="167.500" textLength="26" lengthAdjust="spacingAndGlyphs">Year</text>
    </g>
  </svg>
  <!-- T5 Halloween -->
  <svg class="thumb" style="left:28px;top:668px" width="147" height="149" viewBox="0 0 147 149">
    <defs><filter id="b5" x="-5%" y="-5%" width="110%" height="110%"><feGaussianBlur stdDeviation="1.300"/></filter>
    <clipPath id="p5"><rect x="8.600" y="40" width="129.500" height="96.600"/></clipPath></defs>
    <rect width="147" height="149" fill="#1c2134"/>
    <g font-family="Liberation Serif" font-weight="bold" fill="#efce22" text-anchor="middle">
      <text x="74" y="17.500" font-size="9.500" textLength="82" lengthAdjust="spacingAndGlyphs">HALLOWEEN</text>
      <text x="75.500" y="32.800" font-size="9.500" textLength="115" lengthAdjust="spacingAndGlyphs">COSTUME PARTY</text>
    </g>
    <g clip-path="url(#p5)"><g filter="url(#b5)">
      <rect x="4" y="36" width="140" height="104" fill="#2a1820"/>
      <!-- pink top-left -->
      <path d="M8 40H62L56 58L34 70L8 62Z" fill="#e23c7a"/>
      <path d="M10 44L30 42L24 58Z" fill="#f45a4a"/>
      <!-- blue top center -->
      <path d="M80 40H122L118 58L86 60Z" fill="#5a78d8"/>
      <path d="M98 44L112 42L110 56Z" fill="#c7a0e8"/>
      <rect x="124" y="40" width="14" height="12" fill="#2a3a6a"/><rect x="132" y="42" width="4" height="5" fill="#8fc6f0"/>
      <!-- witch hat dark -->
      <path d="M16 62Q28 44 40 60L48 86L12 92Z" fill="#14101a"/>
      <path d="M10 86L52 80L50 92L10 98Z" fill="#1a1420"/>
      <rect x="13" y="76" width="9" height="7" fill="#e8c820"/>
      <path d="M34 58Q44 50 50 62L46 74L36 72Z" fill="#d8386a"/>
      <!-- man top -->
      <path d="M62 44Q72 38 82 46L82 66Q72 76 64 66Z" fill="#b8805c"/>
      <path d="M62 44Q72 36 82 44L80 50L64 50Z" fill="#20140f"/>
      <path d="M66 62Q72 70 80 62L78 72L68 72Z" fill="#3a2218"/>
      <!-- red horns -->
      <path d="M90 56l3-12 3 10zM104 58l4-12 2 12z" fill="#c4202a"/>
      <!-- clown face right -->
      <path d="M114 62Q126 50 138 62V90L128 96L114 86Z" fill="#c9b0a0"/>
      <path d="M112 60Q126 46 138 58V66L116 68Z" fill="#9a7a6a"/>
      <path d="M120 70h6M130 70h5" stroke="#2a1a1a" stroke-width="2.500"/>
      <!-- woman left face -->
      <path d="M18 98Q30 90 44 100L46 116Q36 128 24 122Z" fill="#d39a7a"/>
      <path d="M28 112Q36 118 44 110L42 116Q36 122 30 118Z" fill="#fff"/>
      <!-- bearded man -->
      <path d="M46 78Q60 66 72 80L72 100Q62 112 50 102Z" fill="#b88462"/>
      <path d="M44 76Q58 60 74 76L72 84L48 86Z" fill="#5a3a24"/>
      <path d="M50 100Q60 108 70 100L66 112L54 112Z" fill="#4a2e1c"/>
      <!-- center woman -->
      <path d="M80 62Q94 54 102 68L108 104L100 112L78 104Z" fill="#1a1012"/>
      <path d="M84 70Q92 62 100 72L100 88Q92 98 86 90Z" fill="#dba890"/>
      <path d="M89 86h7v2.500h-7z" fill="#b82030"/>
      <!-- red dress -->
      <path d="M70 110Q86 96 104 106L110 134L62 136Z" fill="#d42028"/>
      <path d="M84 100Q92 96 98 102L94 112L86 110Z" fill="#dba890"/>
      <!-- skeleton sleeve -->
      <path d="M112 92L138 88V122L116 116Z" fill="#18141a"/>
      <path d="M118 96l18 8M118 102l16 8M120 108l12 6" stroke="#e8e8e8" stroke-width="2"/>
      <!-- hands bottom -->
      <path d="M12 118Q28 124 44 122L56 130L40 136H14Z" fill="#d49a78"/>
      <path d="M84 124Q96 116 106 124L100 136H88Z" fill="#e0b098"/>
      <path d="M112 120Q124 116 134 124L130 136H116Z" fill="#d8a890"/>
      <path d="M8 92L16 96L14 136H8Z" fill="#20141a"/>
    </g></g>
    <!-- second photo strip -->
    <rect x="8.600" y="143.500" width="129.500" height="6" fill="#0d0d14"/>
    <path d="M14 146h10M34 145h22M66 146h16M96 145h26" stroke="#b06ab0" stroke-width="2.500" opacity=".7"/>
  </svg>
  <!-- T6 Mistletoe -->
  <svg class="thumb" style="left:183px;top:668px" width="147" height="149" viewBox="0 0 147 149">
    <rect width="147" height="149" fill="#125a49"/>
    <rect width="39.500" height="149" fill="#d62c28"/>
    <g font-family="Liberation Sans" font-weight="bold" font-size="10" fill="#e6f0de">
      <text x="44" y="73.200" textLength="23" lengthAdjust="spacingAndGlyphs">MEET</text>
      <text x="44" y="85.800" textLength="11.500" lengthAdjust="spacingAndGlyphs">ME</text>
      <text x="44" y="98.600" textLength="28.500" lengthAdjust="spacingAndGlyphs">UNDER</text>
      <text x="44" y="111" textLength="16" lengthAdjust="spacingAndGlyphs">THE</text>
      <text x="44" y="123.900" textLength="44" lengthAdjust="spacingAndGlyphs">MISTETOE</text>
    </g>
    <rect x="40" y="140.500" width="77" height="8.500" fill="#6f8f98"/>
    <path d="M44 141v8M52 141v8M60 141v8M70 141v8M88 141v8M98 141v8M108 141v8" stroke="#2a4a52" stroke-width="2.500"/>
    <ellipse cx="79" cy="147" rx="6" ry="4" fill="#a8a07a"/>
  </svg>

  <!-- color & texture -->
  <div class="abs" style="left:28px;top:829px;width:300px;height:42px;border-radius:4px;background:#ab9856"></div>
  <div class="abs" style="left:48px;top:841px;font-size:14.5px;color:#fff;line-height:18px;font-weight:bold;letter-spacing:-.2px;transform:scaleX(.96);transform-origin:0 0">Color &amp; Texture</div>
  <svg class="abs" style="left:294px;top:839px" width="23" height="23" viewBox="0 0 23 23" fill="none" stroke="#fff" stroke-width="1.700" stroke-linecap="round"><path d="M18.500 12V4.500a2 2 0 0 0-2-2h-12a2 2 0 0 0-2 2v12a2 2 0 0 0 2 2H12"/><path d="M3.500 11L11 3.500M4 17.500L17.500 4M10 17.800l8-8" stroke-width="2"/><path d="M18 14.500v6M15 17.500h6" stroke-width="1.600"/></svg>
  <!--PANEL-->
</div>

<!-- RIGHT -->
<div id="right">
  <div class="abs" style="left:11px;top:10px;width:140px;height:40px;border:1px dashed #b9b9bf;border-radius:3px"></div>
  <svg class="abs" style="left:53px;top:24.500px" width="12" height="12" viewBox="0 0 12 12"><path d="M6 1.200v9.600M1.200 6h9.600" stroke="#6a6a70" stroke-width="1.500"/></svg>
  <div class="abs" style="left:75px;top:24px;font-size:11.700px;color:#7a7a80;line-height:14px">Import</div>
  <div class="abs" style="left:11px;top:61px;width:140px;height:1px;background:#e0e0e6"></div>
  <div class="abs" style="left:11px;top:844px;width:140px;height:1px;background:#c9c9cf"></div>
  <svg class="abs" style="left:48px;top:858px" width="15" height="17" viewBox="0 0 15 17" fill="none" stroke="#c3c3c8" stroke-width="1.500" stroke-linecap="round" stroke-linejoin="round"><path d="M5 1.500h5M1.500 4.500h12M3.200 4.800v9.700a1.300 1.300 0 0 0 1.300 1.300h6a1.300 1.300 0 0 0 1.300-1.300V4.800"/></svg>
  <div class="abs" style="left:71px;top:859px;font-size:12.500px;color:#c6c6cb;line-height:14px;letter-spacing:-.2px">Clear All</div>
  <!-- collapse handle -->
  <svg class="abs" style="left:-12px;top:403px" width="13" height="82" viewBox="0 0 13 82"><path d="M13 0V82Q12 76 6 72Q1 69 1 62V20Q1 13 6 10Q12 6 13 0Z" fill="#ebebf0"/><path d="M3.500 38.500l4 4-4 4" fill="none" stroke="#b5b5bb" stroke-width="1.500" stroke-linecap="round" stroke-linejoin="round"/></svg>
  <!--RIGHT-->
</div>

<!-- SIDEBAR -->
<div id="side">
  <!-- active item light bg with rounded dark neighbours -->
  <div class="abs" style="left:0;top:86px;width:70px;height:70px;background:#ebebf1"></div>
  <div class="abs" style="left:0;top:0;width:70px;height:86px;background:#1c1b21;border-bottom-right-radius:7px"></div>
  <div class="abs" style="left:0;top:156px;width:70px;height:731px;background:#1c1b21;border-top-right-radius:7px"></div>

  <div class="sitem" style="top:16px">
    <svg viewBox="0 0 24 24" fill="none" stroke="#bdbdc0" stroke-width="1.7"><rect x="1.9" y="1.9" width="8" height="8" rx="1.5"/><rect x="1.9" y="14" width="8" height="8" rx="1.5"/><rect x="14" y="1.900" width="8" height="20.100" rx="1.5"/></svg>
    <span>Classic</span>
  </div>
  <div class="sitem" style="top:86px;color:#b5a678">
    <svg viewBox="0 0 24 24" fill="none" stroke="#b5a678" stroke-width="1.700" stroke-linecap="round" stroke-linejoin="round"><path d="M1.900 7V3.500Q1.900 1.900 3.500 1.900H7M17 1.900h3.500q1.600 0 1.600 1.600V7M22.100 17v3.500q0 1.600-1.600 1.600H17M7 22.100H3.500q-1.600 0-1.600-1.600V17"/><rect x="7.300" y="7.300" width="9.400" height="9.400" rx="1.500" transform="rotate(45 12 12)"/></svg>
    <span>Artistic</span>
  </div>
  <div class="sitem" style="top:156px">
    <svg viewBox="0 0 24 24" fill="none" stroke="#bdbdc0" stroke-width="1.700" stroke-linejoin="round"><rect x="1.900" y="1.900" width="20.200" height="20.200" rx="2"/><path d="M12 16.500l-4.300-4.200a2.500 2.500 0 0 1 3.500-3.500l.8.800.8-.8a2.500 2.500 0 0 1 3.500 3.500z"/></svg>
    <span>Funky</span>
  </div>
  <div class="sitem" style="top:226px">
    <svg viewBox="0 0 24 24" fill="none" stroke="#bdbdc0" stroke-width="1.700"><rect x="1.900" y="1.900" width="20.200" height="20.200" rx="2"/><path d="M2 8.700h20M2 15.300h20"/></svg>
    <span>Stitching</span>
  </div>
  <div class="abs" style="left:24px;top:303px;width:22px;height:1px;background:#2d2c33"></div>
  <div class="sitem" style="top:313px">
    <svg viewBox="0 0 24 24" fill="none" stroke="#bdbdc0" stroke-width="1.700" stroke-linejoin="round"><circle cx="12" cy="12" r="10.600"/><path d="M12 6.800l1.600 3.300 3.600.5-2.600 2.500.6 3.600-3.200-1.700-3.200 1.700.6-3.600-2.600-2.500 3.600-.5z"/></svg>
    <span>Sticker</span>
  </div>
  <div class="sitem" style="top:383px">
    <svg viewBox="0 0 24 24" fill="none" stroke="#bdbdc0" stroke-width="1.700" stroke-linejoin="round"><path d="M3.500 1.900h17a1.600 1.600 0 0 1 1.600 1.600v2a1.600 1.600 0 0 1-1.600 1.600H14.600v13.400a1.600 1.600 0 0 1-1.600 1.600h-2a1.600 1.600 0 0 1-1.600-1.600V7.100H3.500a1.600 1.600 0 0 1-1.600-1.600v-2a1.600 1.600 0 0 1 1.600-1.600z"/></svg>
    <span>Text</span>
  </div>
  <div class="sitem" style="top:453px">
    <svg viewBox="0 0 24 24" fill="none" stroke="#bdbdc0" stroke-width="1.700" stroke-linecap="round"><rect x="1.900" y="1.900" width="20.200" height="20.200" rx="3.500"/><path d="M3.500 13L13 3.500M4 20L20 4M11 20.500L20.500 11" stroke-width="2.300"/></svg>
    <span>Background</span>
  </div>
  <div class="sitem" style="top:522.5px">
    <svg style="top:13.500px" viewBox="0 0 24 24" fill="none" stroke="#bdbdc0" stroke-width="1.700" stroke-linecap="round" stroke-linejoin="round"><path d="M8.500 18.500H6a4.500 4.500 0 0 1-.8-8.900 6.500 6.500 0 0 1 12.600-1 5 5 0 0 1 .2 9.900H15.500"/><path d="M12 19v-7.500M9.300 13.800L12 11l2.700 2.800"/></svg>
    <span style="top:45px">Cloud</span>
  </div>
  <div class="sitem" style="top:731px">
    <svg viewBox="0 0 24 24" fill="none" stroke="#bdbdc0" stroke-width="1.700" stroke-linecap="round" stroke-linejoin="round"><path d="M12 1.900a10.100 10.100 0 1 1-5.600 18.500L2.500 22l1-4.200A10.100 10.100 0 0 1 12 1.900z"/><path d="M9.200 9.300a2.800 2.800 0 1 1 4.300 2.400c-1 .7-1.500 1.200-1.500 2.300"/><circle cx="12" cy="17" r=".6" fill="#bdbdc0"/></svg>
    <span>Help Center</span>
  </div>
  <div class="sitem" style="top:800.5px">
    <svg viewBox="0 0 24 24" fill="none" stroke="#bdbdc0" stroke-width="1.700" stroke-linejoin="round"><path d="M9.600 2h4.800l1.200 2.600 2.800-.4 2.400 4.100-1.700 2.300v2.800l1.700 2.300-2.400 4.100-2.800-.4-1.200 2.600H9.600l-1.200-2.600-2.800.4-2.400-4.100 1.700-2.300v-2.800L3.200 8.300l2.400-4.100 2.800.4z" /><circle cx="12" cy="12" r="3"/></svg>
    <span>Settings</span>
  </div>
  <!--SIDE-->
</div>

<!-- TOP BAR -->
<div id="top">
  <!-- logo -->
  <div class="abs" style="left:21px;top:12px;font-size:30px;font-weight:bold;color:#b9a56c;letter-spacing:-1.4px;line-height:36px;transform:scaleX(1.04);transform-origin:0 0">fotor</div>
  <div class="abs" style="left:87px;top:15px;font-size:11px;color:#b9a56c;line-height:10px">®</div>
  <!-- collage menu -->
  <div class="abs" style="left:134px;top:19.5px;font-size:13.2px;color:#c9bd93;line-height:16px;letter-spacing:.1px">COLLAGE</div>
  <svg class="abs" style="left:204px;top:22px" width="13" height="10" viewBox="0 0 13 10"><path d="M2 2.5 L6.5 7 L11 2.5" fill="none" stroke="#c9bd93" stroke-width="1.7" stroke-linecap="round" stroke-linejoin="round"/></svg>
  <!-- new collage -->
  <div class="abs" style="left:246px;top:11px;width:131px;height:30px;border-radius:15px;background:#27262d"></div>
  <svg class="abs" style="left:259px;top:20px" width="12" height="12" viewBox="0 0 12 12"><path d="M6 1v10M1 6h10" stroke="#b5b5b8" stroke-width="1.6" stroke-linecap="round"/></svg>
  <div class="abs" style="left:280px;top:18px;font-size:14.3px;color:#b3b3b6;line-height:16px">New Collage</div>

  <!-- center actions -->
  <!-- Open -->
  <svg class="abs" style="left:942px;top:13px" width="18" height="16" viewBox="0 0 18 16"><path d="M1 2h16M1 8h16M1 14h16" stroke="#d4d4d6" stroke-width="1.8" stroke-linecap="round"/></svg>
  <div class="tlabel" style="left:921px">Open</div>
  <!-- Undo -->
  <svg class="abs" style="left:1004px;top:12px" width="23" height="16" viewBox="0 0 23 16" fill="none" stroke="#d4d4d6" stroke-width="1.700" stroke-linecap="round" stroke-linejoin="round"><path d="M1.600 2.400V13.700H12.200"/><path d="M2.300 11.600C4.500 5.200 9.800 1.800 14.600 2.900C18.200 3.800 20.300 7 20.900 11"/><path d="M7.200 13.300C9 8.800 13 7 16.500 8C18.600 8.600 20.100 9.700 20.900 11"/></svg>
  <div class="tlabel" style="left:985px">Undo</div>
  <!-- Redo -->
  <svg class="abs" style="left:1067px;top:12px;transform:scaleX(-1)" width="23" height="16" viewBox="0 0 23 16" fill="none" stroke="#47464d" stroke-width="1.700" stroke-linecap="round" stroke-linejoin="round"><path d="M1.600 2.400V13.700H12.200"/><path d="M2.300 11.600C4.500 5.200 9.800 1.800 14.600 2.900C18.200 3.800 20.300 7 20.900 11"/><path d="M7.200 13.300C9 8.800 13 7 16.500 8C18.600 8.600 20.100 9.700 20.900 11"/></svg>
  <div class="tlabel" style="left:1049px;color:#47464d">Redo</div>
  <!-- Sync -->
  <svg class="abs" style="left:1133px;top:11.700px" width="20" height="19" viewBox="0 0 20 19"><path d="M3.200 12.500A7 7 0 0 1 8 2.800" fill="none" stroke="#d4d4d6" stroke-width="1.8" stroke-linecap="round"/><path d="M16.800 6.500A7 7 0 0 1 12 16.200" fill="none" stroke="#d4d4d6" stroke-width="1.8" stroke-linecap="round"/><path d="M12 2.500A7 7 0 0 1 17.300 8.500" fill="none" stroke="#d4d4d6" stroke-width="1.8" stroke-linecap="round"/><path d="M8 16.500A7 7 0 0 1 2.700 10.500" fill="none" stroke="#d4d4d6" stroke-width="1.8" stroke-linecap="round"/><path d="M4.500 1.800L8.200 2.800L6.500 6" fill="none" stroke="#d4d4d6" stroke-width="1.6" stroke-linecap="round" stroke-linejoin="round"/><path d="M15.500 17.200L11.800 16.200L13.500 13" fill="none" stroke="#d4d4d6" stroke-width="1.600" stroke-linecap="round" stroke-linejoin="round"/></svg>
  <div class="tlabel" style="left:1113px">Sync</div>
  <!-- Share -->
  <svg class="abs" style="left:1198px;top:12px" width="18" height="18" viewBox="0 0 18 18"><path d="M13.5 3.500L4.500 9L13.500 14.500" fill="none" stroke="#d4d4d6" stroke-width="1.600"/><circle cx="13.800" cy="3.400" r="2.300" fill="#1c1b21" stroke="#d4d4d6" stroke-width="1.600"/><circle cx="4.200" cy="9" r="2.300" fill="#1c1b21" stroke="#d4d4d6" stroke-width="1.600"/><circle cx="13.800" cy="14.600" r="2.300" fill="#1c1b21" stroke="#d4d4d6" stroke-width="1.600"/></svg>
  <div class="tlabel" style="left:1177px">Share</div>
  <!-- Save -->
  <svg class="abs" style="left:1262px;top:12px" width="18" height="18" viewBox="0 0 18 18"><path d="M2 2h10.500l3.500 3.500V16H2z" fill="none" stroke="#d4d4d6" stroke-width="1.800" stroke-linejoin="round"/><path d="M5.500 2.300v4.700h6V2.300" fill="none" stroke="#d4d4d6" stroke-width="1.700" stroke-linejoin="round"/></svg>
  <div class="tlabel" style="left:1241px">Save</div>

  <!-- user -->
  <div class="abs" style="left:1834px;top:21px;font-size:11.300px;color:#d8d8da;line-height:14px;letter-spacing:.1px">FOTOR</div>
  <div class="abs" style="left:1879px;top:13px;width:28px;height:28px;border-radius:50%;background:conic-gradient(from 20deg,#f7c331 0deg,#f39a1f 45deg,#e8452c 80deg,#d81b60 120deg,#a02b93 150deg,#4a3fa0 185deg,#1f7fc4 215deg,#19a7b8 245deg,#2fb457 280deg,#8cc63f 320deg,#e9dc2b 345deg,#f7c331 360deg)"></div>
  <div class="abs" style="left:1879px;top:13px;width:28px;height:28px;border-radius:50%;background:radial-gradient(circle at 40% 30%,rgba(255,255,255,.35),rgba(255,255,255,0) 55%)"></div>
  <!--TOP-->
</div>

<!-- DROPDOWN -->
<div class="abs" style="left:494px;top:95px;width:0;height:0;border-left:7px solid transparent;border-right:7px solid transparent;border-bottom:8px solid #fff;filter:drop-shadow(0 -1px 1px rgba(0,0,0,.08))"></div>
<div id="dd">
  <!-- cut-off previous item -->
  <div class="abs" style="left:19px;top:-1px;width:5px;height:3px;border-radius:0 0 3px 3px;background:#333"></div>
  <!-- Great Vibes -->
  <svg class="abs" style="left:12px;top:12px" width="90" height="32" viewBox="0 0 90 32"><text x="9" y="21" font-family="Liberation Serif" font-style="italic" font-size="15" fill="#333" textLength="57" lengthAdjust="spacingAndGlyphs" transform="skewX(-12)" >Great Vibes</text></svg>
  <!-- Jenna Sue -->
  <svg class="abs" style="left:12px;top:50px" width="90" height="32" viewBox="0 0 90 32"><text x="5" y="20" font-family="Liberation Serif" font-style="italic" font-size="16" fill="#333" textLength="49" lengthAdjust="spacingAndGlyphs" transform="skewX(-6)">Jenna Sue</text></svg>
  <!-- Kool Beans -->
  <svg class="abs" style="left:12px;top:84px" width="120" height="32" viewBox="0 0 120 32"><text x="5" y="21" font-family="Liberation Sans" font-weight="bold" font-style="italic" font-size="18" fill="#333" stroke="#333" stroke-width=".9" stroke-linejoin="round" textLength="92" lengthAdjust="spacingAndGlyphs">Kool Beans</text></svg>
  <!-- knewave -->
  <svg class="abs" style="left:12px;top:122px" width="120" height="32" viewBox="0 0 120 32"><text x="6" y="22" font-family="Liberation Sans" font-weight="bold" font-style="italic" font-size="20" fill="#2b2b2b" stroke="#2b2b2b" stroke-width="1.100" stroke-linejoin="round" textLength="79" lengthAdjust="spacingAndGlyphs">knewave</text></svg>
  <svg class="abs" style="left:204px;top:131px" width="12" height="12" viewBox="0 0 12 12"><path d="M2 6.500L4.800 9.500L10 2.500" fill="none" stroke="#222" stroke-width="2"/></svg>
  <!-- LANGDON -->
  <svg class="abs" style="left:12px;top:158px" width="120" height="32" viewBox="0 0 120 32"><text x="4.500" y="21" font-family="Liberation Sans" font-weight="bold" font-size="16.500" fill="#333" stroke="#333" stroke-width=".9" textLength="60" lengthAdjust="spacingAndGlyphs">LANGDON</text></svg>
  <!-- Lobster -->
  <svg class="abs" style="left:12px;top:194px" width="120" height="32" viewBox="0 0 120 32"><text x="7" y="20" font-family="Liberation Serif" font-weight="bold" font-style="italic" font-size="16" fill="#2b2b2b" textLength="41" lengthAdjust="spacingAndGlyphs">Lobster</text></svg>
  <!-- Lato -->
  <div class="ddi" style="top:234px;font-size:19.5px;line-height:22px;left:17px;color:#333">Lato</div>
  <!-- Lobster Two -->
  <svg class="abs" style="left:12px;top:266px" width="120" height="32" viewBox="0 0 120 32"><text x="5" y="20" font-family="Liberation Serif" font-weight="bold" font-style="italic" font-size="17" fill="#333" textLength="76" lengthAdjust="spacingAndGlyphs">Lobster Two</text></svg>
  <!-- Learning Curve -->
  <svg class="abs" style="left:12px;top:301px" width="140" height="32" viewBox="0 0 140 32"><text x="7" y="20" font-family="Liberation Serif" font-style="italic" font-size="17" fill="#555" textLength="98" lengthAdjust="spacingAndGlyphs" transform="skewX(-10)">Learning Curve</text></svg>
  <!-- Lora -->
  <div class="ddi" style="top:343px;font-size:17.500px;line-height:22px;left:16px;color:#333;font-family:'Liberation Serif',serif">Lora</div>
  <!-- learning Curve Dashed -->
  <svg class="abs" style="left:12px;top:373px" width="200" height="32" viewBox="0 0 200 32"><text x="8" y="20" font-family="Liberation Serif" font-style="italic" font-size="17" fill="#666" textLength="150" lengthAdjust="spacingAndGlyphs" transform="skewX(-10)">learning Curve Dashed</text></svg>
</div>
<!--DD-->

<!-- BOTTOM BAR -->
<div class="abs" style="left:905px;top:905px;width:382px;height:34px;border-radius:17px;background:#3f3f44;box-shadow:0 1px 3px rgba(0,0,0,.25)"></div>
<div class="abs" style="left:918px;top:910px;width:117px;height:24px;border-radius:12px;background:linear-gradient(90deg,#35353a 70%,#3f3f44)"></div>
<div class="abs" style="left:928px;top:915px;font-size:12px;color:#fff;line-height:14px">Untitled collage</div>
<div class="abs" style="left:1060px;top:915px;font-size:12.500px;color:#65656b;line-height:14px;letter-spacing:-.1px">1080px × 1920px</div>
<div class="abs" style="left:1169px;top:921px;width:10px;height:2px;background:#e6e6e8"></div>
<div class="abs" style="left:1200px;top:915px;font-size:12px;color:#fff;line-height:14px">37%</div>
<svg class="abs" style="left:1244px;top:916px" width="12" height="12" viewBox="0 0 12 12"><path d="M6 1v10M1 6h10" stroke="#e6e6e8" stroke-width="1.800"/></svg>
<!--BOTTOM-->

</div>
</body>
</html>
